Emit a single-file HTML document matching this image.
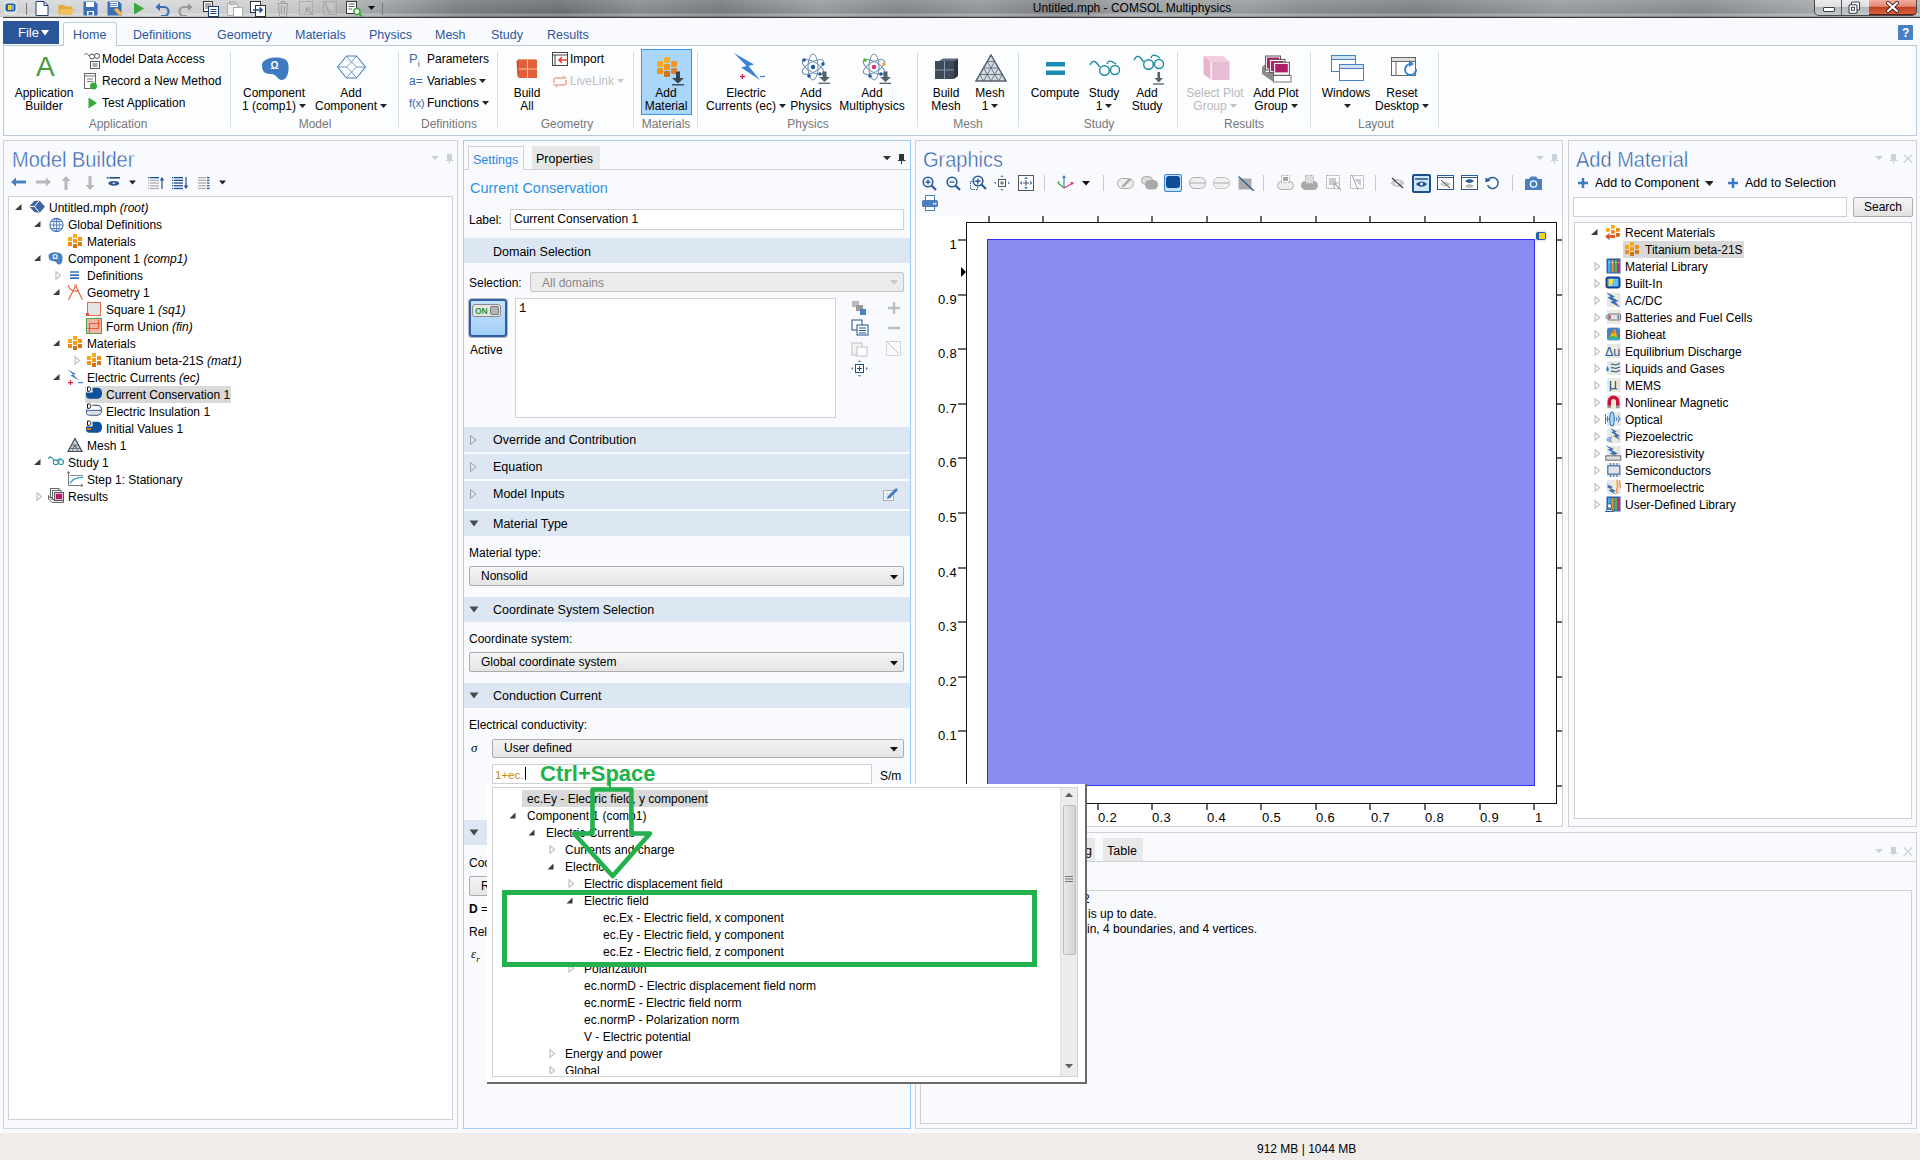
<!DOCTYPE html><html><head><meta charset="utf-8"><style>
*{margin:0;padding:0;box-sizing:border-box}
html,body{width:1928px;height:1168px;overflow:hidden;background:#fff}
body{font-family:"Liberation Sans",sans-serif;font-size:12px;color:#000;position:relative}
.t{position:absolute;white-space:nowrap;line-height:16px;height:16px}
.c{width:300px;text-align:center}
.i{font-style:italic}
</style></head><body><div style="position:absolute;left:0px;top:17px;width:1920px;height:1116px;background:#f9fafe"></div>
<div style="position:absolute;left:0px;top:0px;width:1920px;height:17px;background:linear-gradient(rgba(255,255,255,.10),rgba(0,0,0,.03) 75%,rgba(255,255,255,.30) 88%,rgba(0,0,0,.15)),linear-gradient(90deg,#d4d6d8 0px,#d8dadc 150px,#c8cacc 300px,#a0a3a5 385px,#7c7f82 460px,#6e7174 560px,#8a8d90 640px,#7a7d80 720px,#9a9da0 820px,#85888b 900px,#95989b 980px,#7e8184 1060px,#a3a6a8 1130px,#9a9d9f 1250px,#8c8f92 1300px,#7f8285 1420px,#9a9da0 1560px,#8a8d90 1700px,#a5a8aa 1810px,#b5b8ba 1920px)"></div>
<div style="position:absolute;left:0px;top:17px;width:1920px;height:1px;background:#3a3a3a"></div>
<div class="t c" style="left:982px;top:0px;font-size:12px">Untitled.mph - COMSOL Multiphysics</div>
<div style="position:absolute;left:3px;top:21px;width:56px;height:23px;background:#2b579a"></div>
<div class="t" style="left:18px;top:25px;color:#fff;font-size:13px">File</div>
<svg style="position:absolute;left:41px;top:30px;" width="8" height="6" viewBox="0 0 8 6"><path d="M0 0 H8 L4 5.5 Z" fill="#fff"/></svg>
<div style="position:absolute;left:63px;top:22px;width:54px;height:24px;background:#fcfdff;border:1px solid #b9cde5;border-bottom:none;border-radius:3px 3px 0 0"></div>
<div class="t" style="left:73px;top:27px;color:#2b579a;font-size:12.5px">Home</div>
<div class="t" style="left:133px;top:27px;color:#2b579a;font-size:12.5px">Definitions</div>
<div class="t" style="left:217px;top:27px;color:#2b579a;font-size:12.5px">Geometry</div>
<div class="t" style="left:295px;top:27px;color:#2b579a;font-size:12.5px">Materials</div>
<div class="t" style="left:369px;top:27px;color:#2b579a;font-size:12.5px">Physics</div>
<div class="t" style="left:435px;top:27px;color:#2b579a;font-size:12.5px">Mesh</div>
<div class="t" style="left:491px;top:27px;color:#2b579a;font-size:12.5px">Study</div>
<div class="t" style="left:547px;top:27px;color:#2b579a;font-size:12.5px">Results</div>
<div style="position:absolute;left:0px;top:17px;width:3px;height:119px;background:#fff"></div>
<div style="position:absolute;left:3px;top:45px;width:1914px;height:91px;background:#fcfdff;border:1px solid #b8c9dc"></div>
<div style="position:absolute;left:64px;top:45px;width:52px;height:1px;background:#fcfdff"></div>
<div style="position:absolute;left:230px;top:52px;width:1px;height:75px;background:#d5dde8"></div>
<div style="position:absolute;left:398px;top:52px;width:1px;height:75px;background:#d5dde8"></div>
<div style="position:absolute;left:497px;top:52px;width:1px;height:75px;background:#d5dde8"></div>
<div style="position:absolute;left:633px;top:52px;width:1px;height:75px;background:#d5dde8"></div>
<div style="position:absolute;left:697px;top:52px;width:1px;height:75px;background:#d5dde8"></div>
<div style="position:absolute;left:917px;top:52px;width:1px;height:75px;background:#d5dde8"></div>
<div style="position:absolute;left:1018px;top:52px;width:1px;height:75px;background:#d5dde8"></div>
<div style="position:absolute;left:1177px;top:52px;width:1px;height:75px;background:#d5dde8"></div>
<div style="position:absolute;left:1310px;top:52px;width:1px;height:75px;background:#d5dde8"></div>
<div style="position:absolute;left:1438px;top:52px;width:1px;height:75px;background:#d5dde8"></div>
<div class="t c" style="left:-32px;top:116px;color:#777">Application</div>
<div class="t c" style="left:165px;top:116px;color:#777">Model</div>
<div class="t c" style="left:299px;top:116px;color:#777">Definitions</div>
<div class="t c" style="left:417px;top:116px;color:#777">Geometry</div>
<div class="t c" style="left:516px;top:116px;color:#777">Materials</div>
<div class="t c" style="left:658px;top:116px;color:#777">Physics</div>
<div class="t c" style="left:818px;top:116px;color:#777">Mesh</div>
<div class="t c" style="left:949px;top:116px;color:#777">Study</div>
<div class="t c" style="left:1094px;top:116px;color:#777">Results</div>
<div class="t c" style="left:1226px;top:116px;color:#777">Layout</div>
<div style="position:absolute;left:1898px;top:25px;width:15px;height:15px;background:#4a7fc1;border-radius:1px"></div>
<div class="t" style="left:1902px;top:25px;color:#fff;font-weight:bold;font-size:12px">?</div>
<div style="position:absolute;left:3px;top:140px;width:455px;height:989px;background:#f9fafe;border:1px solid #d0d1d4"></div>
<div style="position:absolute;left:8px;top:196px;width:445px;height:924px;background:#fff;border:1px solid #d0d1d4"></div>
<div style="position:absolute;left:463px;top:140px;width:448px;height:989px;background:#f9fafe;border:1px solid #9fcdf3"></div>
<div style="position:absolute;left:915px;top:140px;width:648px;height:687px;background:#f9fafe;border:1px solid #d0d1d4"></div>
<div style="position:absolute;left:1568px;top:140px;width:349px;height:687px;background:#f9fafe;border:1px solid #d0d1d4"></div>
<div style="position:absolute;left:1574px;top:222px;width:338px;height:597px;background:#fff;border:1px solid #d0d1d4"></div>
<div style="position:absolute;left:915px;top:832px;width:1002px;height:297px;background:#f9fafe;border:1px solid #d0d1d4"></div>
<div style="position:absolute;left:0px;top:1133px;width:1920px;height:27px;background:#f0ecea"></div>
<div class="t" style="left:1257px;top:1141px;">912 MB | 1044 MB</div>
<div class="t" style="left:12px;top:152px;font-size:20px;color:#2a5aa6;line-height:24px;height:24px;top:147px;-webkit-text-stroke:0.45px #f9fafe;transform:scaleY(1.07);transform-origin:0 0">Model Builder</div>
<div class="t" style="left:923px;top:152px;font-size:20px;color:#2a5aa6;line-height:24px;height:24px;top:147px;-webkit-text-stroke:0.45px #f9fafe;transform:scaleY(1.07);transform-origin:0 0">Graphics</div>
<div class="t" style="left:1576px;top:152px;font-size:20px;color:#2a5aa6;line-height:24px;height:24px;top:147px;-webkit-text-stroke:0.45px #f9fafe;transform:scaleY(1.07);transform-origin:0 0">Add Material</div>
<div style="position:absolute;left:85px;top:386px;width:146px;height:17px;background:#d9d9d9"></div>
<svg style="position:absolute;left:15px;top:204px;" width="7" height="7" viewBox="0 0 7 7"><path d="M6.5 0 L6.5 6 L0 6 Z" fill="#3c3c3c"/></svg>
<div class="t" style="left:49px;top:200px;">Untitled.mph <i>(root)</i></div>
<svg style="position:absolute;left:34px;top:221px;" width="7" height="7" viewBox="0 0 7 7"><path d="M6.5 0 L6.5 6 L0 6 Z" fill="#3c3c3c"/></svg>
<div class="t" style="left:68px;top:217px;">Global Definitions</div>
<div class="t" style="left:87px;top:234px;">Materials</div>
<svg style="position:absolute;left:34px;top:255px;" width="7" height="7" viewBox="0 0 7 7"><path d="M6.5 0 L6.5 6 L0 6 Z" fill="#3c3c3c"/></svg>
<div class="t" style="left:68px;top:251px;">Component 1 <i>(comp1)</i></div>
<svg style="position:absolute;left:55px;top:271px;" width="7" height="9" viewBox="0 0 7 9"><path d="M1 0.8 L5.5 4.5 L1 8.2 Z" fill="none" stroke="#c4c4c4" stroke-width="1.3"/></svg>
<div class="t" style="left:87px;top:268px;">Definitions</div>
<svg style="position:absolute;left:53px;top:289px;" width="7" height="7" viewBox="0 0 7 7"><path d="M6.5 0 L6.5 6 L0 6 Z" fill="#3c3c3c"/></svg>
<div class="t" style="left:87px;top:285px;">Geometry 1</div>
<div class="t" style="left:106px;top:302px;">Square 1 <i>(sq1)</i></div>
<div class="t" style="left:106px;top:319px;">Form Union <i>(fin)</i></div>
<svg style="position:absolute;left:53px;top:340px;" width="7" height="7" viewBox="0 0 7 7"><path d="M6.5 0 L6.5 6 L0 6 Z" fill="#3c3c3c"/></svg>
<div class="t" style="left:87px;top:336px;">Materials</div>
<svg style="position:absolute;left:74px;top:356px;" width="7" height="9" viewBox="0 0 7 9"><path d="M1 0.8 L5.5 4.5 L1 8.2 Z" fill="none" stroke="#c4c4c4" stroke-width="1.3"/></svg>
<div class="t" style="left:106px;top:353px;">Titanium beta-21S <i>(mat1)</i></div>
<svg style="position:absolute;left:53px;top:374px;" width="7" height="7" viewBox="0 0 7 7"><path d="M6.5 0 L6.5 6 L0 6 Z" fill="#3c3c3c"/></svg>
<div class="t" style="left:87px;top:370px;">Electric Currents <i>(ec)</i></div>
<div class="t" style="left:106px;top:387px;">Current Conservation 1</div>
<div class="t" style="left:106px;top:404px;">Electric Insulation 1</div>
<div class="t" style="left:106px;top:421px;">Initial Values 1</div>
<div class="t" style="left:87px;top:438px;">Mesh 1</div>
<svg style="position:absolute;left:34px;top:459px;" width="7" height="7" viewBox="0 0 7 7"><path d="M6.5 0 L6.5 6 L0 6 Z" fill="#3c3c3c"/></svg>
<div class="t" style="left:68px;top:455px;">Study 1</div>
<div class="t" style="left:87px;top:472px;">Step 1: Stationary</div>
<svg style="position:absolute;left:36px;top:492px;" width="7" height="9" viewBox="0 0 7 9"><path d="M1 0.8 L5.5 4.5 L1 8.2 Z" fill="none" stroke="#c4c4c4" stroke-width="1.3"/></svg>
<div class="t" style="left:68px;top:489px;">Results</div>
<svg style="position:absolute;left:29px;top:199px;" width="16" height="16" viewBox="0 0 16 16"><path d="M0.3 7.5 L5.2 2 L10.5 1.5 L16 7.7 L10.5 14 L5.2 13 Z" fill="#3d65a0"/><path d="M1 7.5 H5.5 L10.5 1.2 M5.5 7.5 L10.5 13.8" fill="none" stroke="#fff" stroke-width="1"/></svg>
<svg style="position:absolute;left:48px;top:216px;" width="16" height="16" viewBox="0 0 16 16"><circle cx="8.5" cy="9" r="6.6" fill="#fff" stroke="#4a76b3" stroke-width="1.1"/><ellipse cx="8.5" cy="9" rx="2.8" ry="6.6" fill="none" stroke="#4a76b3" stroke-width=".9"/><path d="M2 9 H15 M3 5.5 H14 M3 12.5 H14 M8.5 2.5 V15.5" stroke="#4a76b3" stroke-width=".9"/></svg>
<svg style="position:absolute;left:67px;top:233px;" width="16" height="16" viewBox="0 0 16 16"><rect x="6" y="1" width="4" height="4" fill="#f8ab1c"/><rect x="6" y="6" width="4" height="4" fill="#f39a18"/><rect x="6" y="11" width="4" height="4" fill="#d27212"/><rect x="1" y="4" width="4" height="4" fill="#f8a81a"/><rect x="1" y="9" width="4" height="4" fill="#ef8c1a"/><rect x="11" y="4" width="4" height="4" fill="#f2941a"/><rect x="11" y="9" width="4" height="4" fill="#d87818"/></svg>
<svg style="position:absolute;left:48px;top:250px;" width="16" height="16" viewBox="0 0 16 16"><path d="M0.5 6 C0.5 1.5 12 1 14 5 C15.5 9 14 14 11.5 14.5 C9 15 8.5 11 5 11 C2 11 0.5 9 0.5 6 Z" fill="#4a80c0"/><text x="7" y="9" font-size="7" fill="#fff" text-anchor="middle" font-family="Liberation Sans" font-weight="bold">&#937;</text></svg>
<svg style="position:absolute;left:67px;top:267px;" width="16" height="16" viewBox="0 0 16 16"><path d="M3 5 H12 M3 8.1 H12 M3 11.2 H12" stroke="#3a70b8" stroke-width="1.7"/></svg>
<svg style="position:absolute;left:67px;top:284px;" width="16" height="16" viewBox="0 0 16 16"><circle cx="8.6" cy="1.6" r="1" fill="none" stroke="#e0603a" stroke-width=".9"/><path d="M8.3 2.5 L1.5 15.8 M8.9 2.5 L15.5 15.8 M1.5 1 C2 6.5 8 8.5 11.5 6" fill="none" stroke="#e0603a" stroke-width="1.1"/></svg>
<svg style="position:absolute;left:86px;top:301px;" width="16" height="16" viewBox="0 0 16 16"><rect x="1.5" y="1.5" width="13" height="13" fill="#e4e4e4" stroke="#e06a4a"/><rect x="0" y="12" width="3" height="3" fill="#d9543a"/></svg>
<svg style="position:absolute;left:86px;top:318px;" width="16" height="16" viewBox="0 0 16 16"><rect x="0.5" y="0.5" width="15" height="15" fill="#f2b4a4" stroke="#4aa64a"/><path d="M3.5 5.5 H12.5 V10.5 H3.5 Z M12.5 1.5 V5.5 H14.5 M3.5 10.5 V14.5 M1.5 10.5 H3.5" fill="none" stroke="#e0603a" stroke-width="1.2"/></svg>
<svg style="position:absolute;left:67px;top:335px;" width="16" height="16" viewBox="0 0 16 16"><rect x="6" y="1" width="4" height="4" fill="#f8ab1c"/><rect x="6" y="6" width="4" height="4" fill="#f39a18"/><rect x="6" y="11" width="4" height="4" fill="#d27212"/><rect x="1" y="4" width="4" height="4" fill="#f8a81a"/><rect x="1" y="9" width="4" height="4" fill="#ef8c1a"/><rect x="11" y="4" width="4" height="4" fill="#f2941a"/><rect x="11" y="9" width="4" height="4" fill="#d87818"/></svg>
<svg style="position:absolute;left:86px;top:352px;" width="16" height="16" viewBox="0 0 16 16"><rect x="6" y="1" width="4" height="4" fill="#f8ab1c"/><rect x="6" y="6" width="4" height="4" fill="#f39a18"/><rect x="6" y="11" width="4" height="4" fill="#d27212"/><rect x="1" y="4" width="4" height="4" fill="#f8a81a"/><rect x="1" y="9" width="4" height="4" fill="#ef8c1a"/><rect x="11" y="4" width="4" height="4" fill="#f2941a"/><rect x="11" y="9" width="4" height="4" fill="#d87818"/></svg>
<svg style="position:absolute;left:67px;top:369px;" width="16" height="16" viewBox="0 0 16 16"><path d="M0.5 0.5 L9 5 L6.5 5.8 L12 11.5 L3.5 6.5 L6 5.5 Z" fill="#3d7dd0"/><path d="M1 13.6 H6 M3.5 11.1 V16" stroke="#d8204a" stroke-width="1.2"/><path d="M11 13.6 H16" stroke="#3d7dd0" stroke-width="1.2"/></svg>
<svg style="position:absolute;left:86px;top:386px;" width="16" height="16" viewBox="0 0 16 16"><path d="M0 4.5 C0 2.5 1 1.8 3 1.8 H11 C14.5 1.8 16 4 16 7.3 C16 10.5 14.5 12.8 11 12.8 H3.5 C1 12.8 0 11.5 0 9 Z" fill="#0f529a"/><rect x="0" y="0" width="6.5" height="6.5" fill="#fff"/><path d="M1.5 1 H3.3 C5.3 1 5.3 5.3 3.3 5.3 H1.5 Z" fill="none" stroke="#111" stroke-width="1"/></svg>
<svg style="position:absolute;left:86px;top:403px;" width="16" height="16" viewBox="0 0 16 16"><path d="M0.5 5 C0.5 3 1.5 2.3 3 2.3 H11 C14 2.3 15.5 4 15.5 7.5 C15.5 10.5 14 12.3 11 12.3 H3.5 C1.5 12.3 0.5 11 0.5 9 Z" fill="#dde1e6" stroke="#3a5a8a" stroke-width="1"/><path d="M0.5 2.3 H11 C14 2.3 15.5 4 15.5 7.3 H0.5 Z" fill="#fff" stroke="#3a5a8a" stroke-width="1"/><rect x="0" y="0" width="6.5" height="6.5" fill="#fff"/><path d="M1.5 1 H3.3 C5.3 1 5.3 5.3 3.3 5.3 H1.5 Z" fill="none" stroke="#111" stroke-width="1"/></svg>
<svg style="position:absolute;left:86px;top:420px;" width="16" height="16" viewBox="0 0 16 16"><path d="M0 4.5 C0 2.5 1 1.8 3 1.8 H11 C14.5 1.8 16 4 16 7.3 C16 10.5 14.5 12.8 11 12.8 H3.5 C1 12.8 0 11.5 0 9 Z" fill="#0f529a"/><rect x="0" y="0" width="6.5" height="6.5" fill="#fff"/><path d="M1.5 1 H3.3 C5.3 1 5.3 5.3 3.3 5.3 H1.5 Z" fill="none" stroke="#111" stroke-width="1"/><path d="M0.5 8 H5.5 C5.5 11 0.5 11 0.5 8 Z" fill="#e8780e"/></svg>
<svg style="position:absolute;left:67px;top:437px;" width="16" height="16" viewBox="0 0 16 16"><path d="M8 1.5 L15 14.5 H1 Z" fill="#c9d0d8" stroke="#3e4a5a" stroke-width="1.2"/><path d="M4.5 8 H11.5 M3 11.5 H13 M6 11.5 L8 8 L10 11.5 M5 14.5 L8 8 L11 14.5" stroke="#3e4a5a" stroke-width=".6" fill="none"/></svg>
<svg style="position:absolute;left:48px;top:454px;" width="16" height="16" viewBox="0 0 16 16"><path d="M0.5 5 C2 1.5 4 2.5 5.8 6.5" fill="none" stroke="#1f8fa0" stroke-width="1.1"/><circle cx="7.8" cy="8.3" r="2.4" fill="none" stroke="#1f8fa0" stroke-width="1.1"/><circle cx="13" cy="8" r="2.5" fill="none" stroke="#1f8fa0" stroke-width="1.1"/><path d="M10 6.5 C10.5 3.5 12 4 13.5 5.5" fill="none" stroke="#1f8fa0" stroke-width="1"/></svg>
<svg style="position:absolute;left:67px;top:471px;" width="16" height="16" viewBox="0 0 16 16"><path d="M1.5 1 V14.5 H15.5" fill="none" stroke="#777" stroke-width="1"/><path d="M0 2.5 L1.5 0.5 L3 2.5 M14 13 L16 14.5 L14 16" fill="none" stroke="#777" stroke-width="1"/><path d="M3 4.5 H16" stroke="#888" stroke-width="1"/><path d="M3 12.5 C5 8 9 6.3 16 6.3" fill="none" stroke="#1a8fc0" stroke-width="1.3"/></svg>
<svg style="position:absolute;left:48px;top:488px;" width="16" height="16" viewBox="0 0 16 16"><path d="M0.5 7.5 V11 L4 14.5 H15.5 V11.5 H4 L0.5 8 Z" fill="#eee" stroke="#666"/><rect x="2.5" y="0.5" width="8.5" height="9" fill="#fff" stroke="#666"/><rect x="4.5" y="2.5" width="8.5" height="9" fill="#fff" stroke="#666"/><rect x="6.5" y="4.5" width="9" height="8" fill="#fff" stroke="#555"/><rect x="7.5" y="5.5" width="7" height="6" fill="#b01e6a" stroke="#f0c8dc" stroke-width=".8"/></svg>
<svg style="position:absolute;left:10px;top:176px;" width="18" height="12" viewBox="0 0 18 12"><path d="M1 6 L6 1.5 V4.5 H16 V7.5 H6 V10.5 Z" fill="#4a80c0"/></svg>
<svg style="position:absolute;left:34px;top:176px;" width="18" height="12" viewBox="0 0 18 12"><path d="M17 6 L12 1.5 V4.5 H2 V7.5 H12 V10.5 Z" fill="#b8b8b8"/></svg>
<svg style="position:absolute;left:60px;top:175px;" width="12" height="16" viewBox="0 0 12 16"><path d="M6 1 L10.5 6 H7.5 V15 H4.5 V6 H1.5 Z" fill="#b8b8b8"/></svg>
<svg style="position:absolute;left:84px;top:175px;" width="12" height="16" viewBox="0 0 12 16"><path d="M6 15 L10.5 10 H7.5 V1 H4.5 V10 H1.5 Z" fill="#b8b8b8"/></svg>
<svg style="position:absolute;left:106px;top:176px;" width="16" height="12" viewBox="0 0 16 12"><rect x="1" y="1" width="1.6" height="1.6" fill="#1d4f8f"/><rect x="3.5" y="1" width="10.5" height="1.6" fill="#1d4f8f"/><ellipse cx="7.8" cy="7.3" rx="5.3" ry="2.4" fill="#2a5a98"/><ellipse cx="7.8" cy="7.3" rx="1.3" ry=".8" fill="#fff"/></svg>
<svg style="position:absolute;left:129px;top:180px;" width="8" height="5" viewBox="0 0 8 5"><path d="M0 0.5 H7 L3.5 4.5 Z" fill="#222"/></svg>
<svg style="position:absolute;left:148px;top:176px;" width="17" height="14" viewBox="0 0 17 14"><rect x="0" y="1" width="1.3" height="1.3" fill="#1d4f8f"/><rect x="2" y="1" width="9" height="1.3" fill="#1d4f8f"/><rect x="0" y="3.7" width="1.3" height="1.3" fill="#b0b0b0"/><rect x="2" y="3.7" width="9" height="1.3" fill="#b0b0b0"/><rect x="0" y="6.4" width="1.3" height="1.3" fill="#b0b0b0"/><rect x="2" y="6.4" width="9" height="1.3" fill="#b0b0b0"/><rect x="0" y="9.1" width="1.3" height="1.3" fill="#b0b0b0"/><rect x="2" y="9.1" width="9" height="1.3" fill="#b0b0b0"/><rect x="0" y="11.8" width="1.3" height="1.3" fill="#b0b0b0"/><rect x="2" y="11.8" width="9" height="1.3" fill="#b0b0b0"/><path d="M14 13 V2.5" stroke="#1d4f8f" stroke-width="1.2"/><path d="M11.8 4.5 L14 1 L16.2 4.5 Z" fill="#1d4f8f"/></svg>
<svg style="position:absolute;left:172px;top:176px;" width="17" height="14" viewBox="0 0 17 14"><rect x="0" y="1" width="1.3" height="1.3" fill="#1d4f8f"/><rect x="2" y="1" width="9" height="1.3" fill="#1d4f8f"/><rect x="0" y="3.7" width="1.3" height="1.3" fill="#1d4f8f"/><rect x="2" y="3.7" width="9" height="1.3" fill="#1d4f8f"/><rect x="0" y="6.4" width="1.3" height="1.3" fill="#1d4f8f"/><rect x="2" y="6.4" width="9" height="1.3" fill="#1d4f8f"/><rect x="0" y="9.1" width="1.3" height="1.3" fill="#1d4f8f"/><rect x="2" y="9.1" width="9" height="1.3" fill="#1d4f8f"/><rect x="0" y="11.8" width="1.3" height="1.3" fill="#1d4f8f"/><rect x="2" y="11.8" width="9" height="1.3" fill="#1d4f8f"/><path d="M14 1 V11.5" stroke="#1d4f8f" stroke-width="1.2"/><path d="M11.8 9.5 L14 13 L16.2 9.5 Z" fill="#1d4f8f"/></svg>
<svg style="position:absolute;left:198px;top:176px;" width="12" height="14" viewBox="0 0 12 14"><rect x="0" y="1" width="8" height="1.3" fill="#b0b0b0"/><rect x="9" y="1" width="2.5" height="1.3" fill="#1d4f8f"/><rect x="0" y="3.7" width="8" height="1.3" fill="#b0b0b0"/><rect x="9" y="3.7" width="2.5" height="1.3" fill="#1d4f8f"/><rect x="0" y="6.4" width="8" height="1.3" fill="#b0b0b0"/><rect x="9" y="6.4" width="2.5" height="1.3" fill="#1d4f8f"/><rect x="0" y="9.1" width="8" height="1.3" fill="#b0b0b0"/><rect x="9" y="9.1" width="2.5" height="1.3" fill="#1d4f8f"/><rect x="0" y="11.8" width="8" height="1.3" fill="#b0b0b0"/><rect x="9" y="11.8" width="2.5" height="1.3" fill="#1d4f8f"/></svg>
<svg style="position:absolute;left:219px;top:180px;" width="8" height="5" viewBox="0 0 8 5"><path d="M0 0.5 H7 L3.5 4.5 Z" fill="#222"/></svg>
<svg style="position:absolute;left:431px;top:156px;" width="8" height="5" viewBox="0 0 8 5"><path d="M0 0 H8 L4 4.2 Z" fill="#c9d1dc"/></svg>
<svg style="position:absolute;left:446px;top:154px;" width="8" height="11" viewBox="0 0 8 11"><path d="M1 0 H6 V6 H7.5 V7 H4 V10 H3 V7 H-0.5 V6 H1 Z" fill="#c9d1dc"/></svg>
<svg style="position:absolute;left:1536px;top:156px;" width="8" height="5" viewBox="0 0 8 5"><path d="M0 0 H8 L4 4.2 Z" fill="#c9d1dc"/></svg>
<svg style="position:absolute;left:1551px;top:154px;" width="8" height="11" viewBox="0 0 8 11"><path d="M1 0 H6 V6 H7.5 V7 H4 V10 H3 V7 H-0.5 V6 H1 Z" fill="#c9d1dc"/></svg>
<svg style="position:absolute;left:1875px;top:156px;" width="8" height="5" viewBox="0 0 8 5"><path d="M0 0 H8 L4 4.2 Z" fill="#c9d1dc"/></svg>
<svg style="position:absolute;left:1890px;top:154px;" width="8" height="11" viewBox="0 0 8 11"><path d="M1 0 H6 V6 H7.5 V7 H4 V10 H3 V7 H-0.5 V6 H1 Z" fill="#c9d1dc"/></svg>
<svg style="position:absolute;left:1903px;top:154px;" width="10" height="9" viewBox="0 0 10 9"><path d="M0.8 0.5 L9.2 8.5 M9.2 0.5 L0.8 8.5" stroke="#c9d1dc" stroke-width="1.3"/></svg>
<svg style="position:absolute;left:1875px;top:849px;" width="8" height="5" viewBox="0 0 8 5"><path d="M0 0 H8 L4 4.2 Z" fill="#c9d1dc"/></svg>
<svg style="position:absolute;left:1890px;top:847px;" width="8" height="11" viewBox="0 0 8 11"><path d="M1 0 H6 V6 H7.5 V7 H4 V10 H3 V7 H-0.5 V6 H1 Z" fill="#c9d1dc"/></svg>
<svg style="position:absolute;left:1903px;top:847px;" width="10" height="9" viewBox="0 0 10 9"><path d="M0.8 0.5 L9.2 8.5 M9.2 0.5 L0.8 8.5" stroke="#c9d1dc" stroke-width="1.3"/></svg>
<div style="position:absolute;left:464px;top:169px;width:446px;height:1px;background:#d0d1d4"></div>
<div style="position:absolute;left:468px;top:146px;width:56px;height:24px;background:#f9fafe;border:1px solid #d0d1d4;border-bottom:none"></div>
<div class="t" style="left:473px;top:152px;color:#1e87e5;font-size:12.5px">Settings</div>
<div style="position:absolute;left:532px;top:146px;width:68px;height:23px;background:#e6e6e6"></div>
<div class="t" style="left:536px;top:151px;font-size:12.5px">Properties</div>
<svg style="position:absolute;left:883px;top:156px;" width="8" height="5" viewBox="0 0 8 5"><path d="M0 0 H8 L4 4.2 Z" fill="#333"/></svg>
<svg style="position:absolute;left:898px;top:154px;" width="8" height="11" viewBox="0 0 8 11"><path d="M1 0 H6 V6 H7.5 V7 H4 V10 H3 V7 H-0.5 V6 H1 Z" fill="#333"/></svg>
<div class="t" style="left:470px;top:181px;color:#2e93e3;font-size:14.5px;line-height:18px;height:18px;top:179px">Current Conservation</div>
<div class="t" style="left:469px;top:212px;">Label:</div>
<div style="position:absolute;left:510px;top:209px;width:394px;height:21px;background:#fff;border:1px solid #d0d0d0"></div>
<div class="t" style="left:514px;top:211px;">Current Conservation 1</div>
<div style="position:absolute;left:464px;top:238px;width:446px;height:25px;background:#dde7f3"></div>
<div class="t" style="left:493px;top:244px;font-size:12.5px">Domain Selection</div>
<div class="t" style="left:469px;top:275px;">Selection:</div>
<div style="position:absolute;left:530px;top:272px;width:374px;height:20px;background:#ececec;border:1px solid #c4c4c4;border-radius:2px"></div>
<div class="t" style="left:542px;top:275px;color:#888">All domains</div>
<svg style="position:absolute;left:890px;top:280px;" width="8" height="5" viewBox="0 0 8 5"><path d="M0 0 H8 L4 4.5 Z" fill="#c8c8c8"/></svg>
<div style="position:absolute;left:469px;top:299px;width:38px;height:38px;background:linear-gradient(#c4e2fc,#a4d0f6);border:2px solid #2f5ea8;border-radius:3px;box-shadow:0 0 0 1px #b8b8b8"></div>
<div style="position:absolute;left:472px;top:304px;width:29px;height:13px;background:#e6e6e6;border:1.5px solid #8a8a8a;border-radius:3px"></div>
<div class="t" style="left:475px;top:303px;color:#1a9a3a;font-size:8.5px;font-weight:bold;line-height:10px;height:10px;top:306px">ON</div>
<div style="position:absolute;left:490px;top:306px;width:9px;height:9px;background:#b4b4b4;border:1.5px solid #7a7a7a;border-radius:2px"></div>
<div class="t" style="left:470px;top:342px;">Active</div>
<div style="position:absolute;left:515px;top:298px;width:321px;height:120px;background:#fff;border:1px solid #cfd2d6"></div>
<div class="t" style="left:519px;top:301px;font-family:'Liberation Mono';font-size:12px">1</div>
<svg style="position:absolute;left:851px;top:300px;" width="16" height="16" viewBox="0 0 16 16"><rect x="1" y="1" width="7" height="6" fill="#bbb"/><rect x="5" y="5" width="7" height="6" fill="#999"/><rect x="9" y="9" width="6" height="6" fill="#4a80c0"/></svg>
<svg style="position:absolute;left:886px;top:300px;" width="16" height="16" viewBox="0 0 16 16"><path d="M8 2 V14 M2 8 H14" stroke="#b8bec6" stroke-width="2.5"/></svg>
<svg style="position:absolute;left:851px;top:319px;" width="18" height="17" viewBox="0 0 18 17"><rect x="1" y="1" width="10" height="10" fill="#fff" stroke="#1d4f8f"/><rect x="6" y="6" width="11" height="10" fill="#fff" stroke="#1d4f8f"/><path d="M8 9 H15 M8 11.5 H15 M8 14 H15" stroke="#1d4f8f"/></svg>
<svg style="position:absolute;left:886px;top:320px;" width="16" height="16" viewBox="0 0 16 16"><path d="M2 8 H14" stroke="#b8bec6" stroke-width="2.5"/></svg>
<svg style="position:absolute;left:851px;top:340px;" width="17" height="17" viewBox="0 0 17 17"><rect x="1" y="3" width="10" height="12" fill="#f2f2f2" stroke="#c0c0c0"/><rect x="6" y="7" width="10" height="9" fill="#fff" stroke="#c0c0c0"/></svg>
<svg style="position:absolute;left:885px;top:340px;" width="17" height="17" viewBox="0 0 17 17"><rect x="1.5" y="1.5" width="14" height="14" fill="none" stroke="#c0c0c0" stroke-dasharray="2 1"/><path d="M3 3 L14 14" stroke="#c0c0c0"/></svg>
<svg style="position:absolute;left:851px;top:360px;" width="17" height="17" viewBox="0 0 17 17"><rect x="4.5" y="4.5" width="8" height="8" fill="#fff" stroke="#1d4f8f"/><path d="M8.5 6 V11 M6 8.5 H11" stroke="#1d4f8f"/><path d="M8.5 0 L10 2 H7 Z M8.5 17 L10 15 H7 Z M0 8.5 L2 7 V10 Z M17 8.5 L15 7 V10 Z" fill="#4a80c0"/></svg>
<div style="position:absolute;left:464px;top:427px;width:446px;height:25px;background:#dde7f3"></div>
<svg style="position:absolute;left:470px;top:435px;" width="7" height="10" viewBox="0 0 7 10"><path d="M0.5 0.5 L6 5 L0.5 9.5 Z" fill="none" stroke="#9aa0a8"/></svg>
<div class="t" style="left:493px;top:432px;font-size:12.5px">Override and Contribution</div>
<div style="position:absolute;left:464px;top:454px;width:446px;height:25px;background:#dde7f3"></div>
<svg style="position:absolute;left:470px;top:462px;" width="7" height="10" viewBox="0 0 7 10"><path d="M0.5 0.5 L6 5 L0.5 9.5 Z" fill="none" stroke="#9aa0a8"/></svg>
<div class="t" style="left:493px;top:459px;font-size:12.5px">Equation</div>
<div style="position:absolute;left:464px;top:481px;width:446px;height:25px;background:#dde7f3"></div>
<svg style="position:absolute;left:470px;top:489px;" width="7" height="10" viewBox="0 0 7 10"><path d="M0.5 0.5 L6 5 L0.5 9.5 Z" fill="none" stroke="#9aa0a8"/></svg>
<div class="t" style="left:493px;top:486px;font-size:12.5px">Model Inputs</div>
<div style="position:absolute;left:464px;top:506px;width:446px;height:3px;background:#dde7f3"></div>
<svg style="position:absolute;left:882px;top:485px;" width="17" height="17" viewBox="0 0 17 17"><rect x="1.5" y="5.5" width="10" height="10" fill="#fff" stroke="#aab"/><path d="M1.5 9 H11.5 M1.5 12 H11.5 M5 5.5 V15.5 M8 5.5 V15.5" stroke="#ccd" stroke-width=".8"/><path d="M6 11 L14 3 L16 5 L8 13 L5 14 Z" fill="#3f7bc0"/></svg>
<div style="position:absolute;left:464px;top:511px;width:446px;height:25px;background:#dde7f3"></div>
<svg style="position:absolute;left:469px;top:520px;" width="10" height="7" viewBox="0 0 10 7"><path d="M0.5 0.5 H9.5 L5 6.5 Z" fill="#4a4a4a"/></svg>
<div class="t" style="left:493px;top:516px;font-size:12.5px">Material Type</div>
<div class="t" style="left:469px;top:545px;">Material type:</div>
<div style="position:absolute;left:469px;top:566px;width:435px;height:20px;background:linear-gradient(#f4f4f4,#e4e4e4);border:1px solid #acacac;border-radius:2px"></div>
<div class="t" style="left:481px;top:568px;">Nonsolid</div>
<svg style="position:absolute;left:890px;top:575px;" width="8" height="5" viewBox="0 0 8 5"><path d="M0 0 H8 L4 4.5 Z" fill="#111"/></svg>
<div style="position:absolute;left:464px;top:597px;width:446px;height:25px;background:#dde7f3"></div>
<svg style="position:absolute;left:469px;top:606px;" width="10" height="7" viewBox="0 0 10 7"><path d="M0.5 0.5 H9.5 L5 6.5 Z" fill="#4a4a4a"/></svg>
<div class="t" style="left:493px;top:602px;font-size:12.5px">Coordinate System Selection</div>
<div class="t" style="left:469px;top:631px;">Coordinate system:</div>
<div style="position:absolute;left:469px;top:652px;width:435px;height:20px;background:linear-gradient(#f4f4f4,#e4e4e4);border:1px solid #acacac;border-radius:2px"></div>
<div class="t" style="left:481px;top:654px;">Global coordinate system</div>
<svg style="position:absolute;left:890px;top:661px;" width="8" height="5" viewBox="0 0 8 5"><path d="M0 0 H8 L4 4.5 Z" fill="#111"/></svg>
<div style="position:absolute;left:464px;top:683px;width:446px;height:25px;background:#dde7f3"></div>
<svg style="position:absolute;left:469px;top:692px;" width="10" height="7" viewBox="0 0 10 7"><path d="M0.5 0.5 H9.5 L5 6.5 Z" fill="#4a4a4a"/></svg>
<div class="t" style="left:493px;top:688px;font-size:12.5px">Conduction Current</div>
<div class="t" style="left:469px;top:717px;">Electrical conductivity:</div>
<div class="t" style="left:471px;top:740px;font-family:'Liberation Serif';font-style:italic;font-size:13px">&#963;</div>
<div style="position:absolute;left:492px;top:739px;width:412px;height:19px;background:linear-gradient(#f4f4f4,#e4e4e4);border:1px solid #acacac;border-radius:2px"></div>
<div class="t" style="left:504px;top:740px;">User defined</div>
<svg style="position:absolute;left:890px;top:747px;" width="8" height="5" viewBox="0 0 8 5"><path d="M0 0 H8 L4 4.5 Z" fill="#111"/></svg>
<div style="position:absolute;left:492px;top:764px;width:380px;height:20px;background:#fff;border:1px solid #d0d0d0"></div>
<div class="t" style="left:495px;top:767px;color:#c08a1a;font-size:11.5px">1+ec.</div>
<div style="position:absolute;left:525px;top:767px;width:1px;height:13px;background:#000"></div>
<div class="t" style="left:880px;top:768px;">S/m</div>
<div style="position:absolute;left:464px;top:820px;width:446px;height:25px;background:#dde7f3"></div>
<svg style="position:absolute;left:469px;top:829px;" width="10" height="7" viewBox="0 0 10 7"><path d="M0.5 0.5 H9.5 L5 6.5 Z" fill="#4a4a4a"/></svg>
<div class="t" style="left:493px;top:825px;font-size:12.5px"></div>
<div class="t" style="left:469px;top:855px;">Coordinate system:</div>
<div style="position:absolute;left:469px;top:876px;width:435px;height:20px;background:linear-gradient(#f4f4f4,#e4e4e4);border:1px solid #acacac;border-radius:2px"></div>
<div class="t" style="left:481px;top:878px;">Reference</div>
<svg style="position:absolute;left:890px;top:885px;" width="8" height="5" viewBox="0 0 8 5"><path d="M0 0 H8 L4 4.5 Z" fill="#111"/></svg>
<div class="t" style="left:469px;top:901px;"><b>D</b> = &#949;<sub>0</sub>&#949;<sub>r</sub><b>E</b></div>
<div class="t" style="left:469px;top:924px;">Relative permittivity:</div>
<div class="t" style="left:471px;top:946px;font-family:'Liberation Serif';font-style:italic;font-size:13px">&#949;<sub style='font-size:9px'>r</sub></div>
<div style="position:absolute;left:492px;top:944px;width:412px;height:19px;background:linear-gradient(#f4f4f4,#e4e4e4);border:1px solid #acacac;border-radius:2px"></div>
<div class="t" style="left:504px;top:945px;">User defined</div>
<svg style="position:absolute;left:890px;top:952px;" width="8" height="5" viewBox="0 0 8 5"><path d="M0 0 H8 L4 4.5 Z" fill="#111"/></svg>
<div style="position:absolute;left:916px;top:216px;width:646px;height:610px;background:#fff"></div>
<div style="position:absolute;left:966px;top:222px;width:591px;height:582px;background:#fff;border:1px solid #111"></div>
<div style="position:absolute;left:987px;top:239px;width:548px;height:547px;background:#8b8cf0;border:1px solid #3030f8"></div>
<div style="position:absolute;left:988px;top:216px;width:2px;height:6px;background:#6a6a6a"></div>
<div style="position:absolute;left:988px;top:804px;width:2px;height:6px;background:#6a6a6a"></div>
<div style="position:absolute;left:958px;top:785px;width:8px;height:2px;background:#6a6a6a"></div>
<div style="position:absolute;left:1557px;top:785px;width:5px;height:2px;background:#6a6a6a"></div>
<div style="position:absolute;left:1042px;top:216px;width:2px;height:6px;background:#6a6a6a"></div>
<div style="position:absolute;left:1042px;top:804px;width:2px;height:6px;background:#6a6a6a"></div>
<div style="position:absolute;left:958px;top:730px;width:8px;height:2px;background:#6a6a6a"></div>
<div style="position:absolute;left:1557px;top:730px;width:5px;height:2px;background:#6a6a6a"></div>
<div style="position:absolute;left:1097px;top:216px;width:2px;height:6px;background:#6a6a6a"></div>
<div style="position:absolute;left:1097px;top:804px;width:2px;height:6px;background:#6a6a6a"></div>
<div style="position:absolute;left:958px;top:676px;width:8px;height:2px;background:#6a6a6a"></div>
<div style="position:absolute;left:1557px;top:676px;width:5px;height:2px;background:#6a6a6a"></div>
<div style="position:absolute;left:1151px;top:216px;width:2px;height:6px;background:#6a6a6a"></div>
<div style="position:absolute;left:1151px;top:804px;width:2px;height:6px;background:#6a6a6a"></div>
<div style="position:absolute;left:958px;top:621px;width:8px;height:2px;background:#6a6a6a"></div>
<div style="position:absolute;left:1557px;top:621px;width:5px;height:2px;background:#6a6a6a"></div>
<div style="position:absolute;left:1206px;top:216px;width:2px;height:6px;background:#6a6a6a"></div>
<div style="position:absolute;left:1206px;top:804px;width:2px;height:6px;background:#6a6a6a"></div>
<div style="position:absolute;left:958px;top:567px;width:8px;height:2px;background:#6a6a6a"></div>
<div style="position:absolute;left:1557px;top:567px;width:5px;height:2px;background:#6a6a6a"></div>
<div style="position:absolute;left:1260px;top:216px;width:2px;height:6px;background:#6a6a6a"></div>
<div style="position:absolute;left:1260px;top:804px;width:2px;height:6px;background:#6a6a6a"></div>
<div style="position:absolute;left:958px;top:512px;width:8px;height:2px;background:#6a6a6a"></div>
<div style="position:absolute;left:1557px;top:512px;width:5px;height:2px;background:#6a6a6a"></div>
<div style="position:absolute;left:1315px;top:216px;width:2px;height:6px;background:#6a6a6a"></div>
<div style="position:absolute;left:1315px;top:804px;width:2px;height:6px;background:#6a6a6a"></div>
<div style="position:absolute;left:958px;top:457px;width:8px;height:2px;background:#6a6a6a"></div>
<div style="position:absolute;left:1557px;top:457px;width:5px;height:2px;background:#6a6a6a"></div>
<div style="position:absolute;left:1369px;top:216px;width:2px;height:6px;background:#6a6a6a"></div>
<div style="position:absolute;left:1369px;top:804px;width:2px;height:6px;background:#6a6a6a"></div>
<div style="position:absolute;left:958px;top:403px;width:8px;height:2px;background:#6a6a6a"></div>
<div style="position:absolute;left:1557px;top:403px;width:5px;height:2px;background:#6a6a6a"></div>
<div style="position:absolute;left:1424px;top:216px;width:2px;height:6px;background:#6a6a6a"></div>
<div style="position:absolute;left:1424px;top:804px;width:2px;height:6px;background:#6a6a6a"></div>
<div style="position:absolute;left:958px;top:348px;width:8px;height:2px;background:#6a6a6a"></div>
<div style="position:absolute;left:1557px;top:348px;width:5px;height:2px;background:#6a6a6a"></div>
<div style="position:absolute;left:1479px;top:216px;width:2px;height:6px;background:#6a6a6a"></div>
<div style="position:absolute;left:1479px;top:804px;width:2px;height:6px;background:#6a6a6a"></div>
<div style="position:absolute;left:958px;top:294px;width:8px;height:2px;background:#6a6a6a"></div>
<div style="position:absolute;left:1557px;top:294px;width:5px;height:2px;background:#6a6a6a"></div>
<div style="position:absolute;left:1533px;top:216px;width:2px;height:6px;background:#6a6a6a"></div>
<div style="position:absolute;left:1533px;top:804px;width:2px;height:6px;background:#6a6a6a"></div>
<div style="position:absolute;left:958px;top:239px;width:8px;height:2px;background:#6a6a6a"></div>
<div style="position:absolute;left:1557px;top:239px;width:5px;height:2px;background:#6a6a6a"></div>
<div class="t" style="left:1098px;top:810px;font-size:13px;letter-spacing:.3px">0.2</div>
<div class="t" style="left:1152px;top:810px;font-size:13px;letter-spacing:.3px">0.3</div>
<div class="t" style="left:1207px;top:810px;font-size:13px;letter-spacing:.3px">0.4</div>
<div class="t" style="left:1262px;top:810px;font-size:13px;letter-spacing:.3px">0.5</div>
<div class="t" style="left:1316px;top:810px;font-size:13px;letter-spacing:.3px">0.6</div>
<div class="t" style="left:1371px;top:810px;font-size:13px;letter-spacing:.3px">0.7</div>
<div class="t" style="left:1425px;top:810px;font-size:13px;letter-spacing:.3px">0.8</div>
<div class="t" style="left:1480px;top:810px;font-size:13px;letter-spacing:.3px">0.9</div>
<div class="t" style="left:1535px;top:810px;font-size:13px;letter-spacing:.3px">1</div>
<div class="t" style="left:860px;top:728px;width:97px;text-align:right;font-size:13px;letter-spacing:.3px">0.1</div>
<div class="t" style="left:860px;top:674px;width:97px;text-align:right;font-size:13px;letter-spacing:.3px">0.2</div>
<div class="t" style="left:860px;top:619px;width:97px;text-align:right;font-size:13px;letter-spacing:.3px">0.3</div>
<div class="t" style="left:860px;top:565px;width:97px;text-align:right;font-size:13px;letter-spacing:.3px">0.4</div>
<div class="t" style="left:860px;top:510px;width:97px;text-align:right;font-size:13px;letter-spacing:.3px">0.5</div>
<div class="t" style="left:860px;top:455px;width:97px;text-align:right;font-size:13px;letter-spacing:.3px">0.6</div>
<div class="t" style="left:860px;top:401px;width:97px;text-align:right;font-size:13px;letter-spacing:.3px">0.7</div>
<div class="t" style="left:860px;top:346px;width:97px;text-align:right;font-size:13px;letter-spacing:.3px">0.8</div>
<div class="t" style="left:860px;top:292px;width:97px;text-align:right;font-size:13px;letter-spacing:.3px">0.9</div>
<div class="t" style="left:860px;top:237px;width:97px;text-align:right;font-size:13px;letter-spacing:.3px">1</div>
<svg style="position:absolute;left:961px;top:267px;" width="5" height="10" viewBox="0 0 5 10"><path d="M0 0 L5 5 L0 10 Z" fill="#000"/></svg>
<svg style="position:absolute;left:1534px;top:229px;" width="15" height="14" viewBox="0 0 15 14"><path d="M1 2 L11 1 L14 7 L11 13 L1 12 Z" fill="#e8e8ee" opacity=".8"/><rect x="2" y="3" width="10" height="8" rx="2" fill="#1f5fb0"/><path d="M5 4 H11 V10 H5 Z" fill="#f5d21c"/></svg>
<svg style="position:absolute;left:922px;top:176px;" width="16" height="15" viewBox="0 0 16 15"><circle cx="6" cy="6" r="4.8" fill="none" stroke="#2a5a9a" stroke-width="1.6"/><path d="M9.5 9.5 L14 14" stroke="#2a5a9a" stroke-width="2.2"/><path d="M6 3.5 V8.5 M3.5 6 H8.5" stroke="#2a5a9a" stroke-width="1.3"/></svg>
<svg style="position:absolute;left:946px;top:176px;" width="16" height="15" viewBox="0 0 16 15"><circle cx="6" cy="6" r="4.8" fill="none" stroke="#2a5a9a" stroke-width="1.6"/><path d="M9.5 9.5 L14 14" stroke="#2a5a9a" stroke-width="2.2"/><path d="M3.5 6 H8.5" stroke="#2a5a9a" stroke-width="1.3"/></svg>
<svg style="position:absolute;left:970px;top:175px;" width="17" height="16" viewBox="0 0 17 16"><rect x="0.5" y="6.5" width="7" height="8" fill="none" stroke="#2a5a9a" stroke-dasharray="1.5 1"/><circle cx="8" cy="6" r="4.8" fill="none" stroke="#2a5a9a" stroke-width="1.6"/><path d="M11.5 9.5 L16 14" stroke="#2a5a9a" stroke-width="2.2"/><path d="M8 3.5 V8.5 M5.5 6 H10.5" stroke="#2a5a9a" stroke-width="1.3"/></svg>
<svg style="position:absolute;left:994px;top:175px;" width="16" height="17" viewBox="0 0 16 17"><rect x="4.5" y="4.5" width="7" height="7" fill="#fff" stroke="#555"/><path d="M8 6 V10 M6 8 H10" stroke="#555"/><path d="M8 0 L9.5 2 H6.5 Z M8 16 L9.5 14 H6.5 Z M0 8 L2 6.5 V9.5 Z M16 8 L14 6.5 V9.5 Z" fill="#4a80c0"/></svg>
<svg style="position:absolute;left:1018px;top:175px;" width="16" height="16" viewBox="0 0 16 16"><rect x="0.5" y="0.5" width="15" height="15" fill="#fff" stroke="#555"/><path d="M8 5 V11 M5 8 H11" stroke="#555"/><path d="M8 1.5 L10 4 H6 Z M8 14.5 L10 12 H6 Z M1.5 8 L4 6 V10 Z M14.5 8 L12 6 V10 Z" fill="#4a80c0"/></svg>
<div style="position:absolute;left:1044px;top:175px;width:1px;height:16px;background:#c8ccd2"></div>
<svg style="position:absolute;left:1057px;top:175px;" width="18" height="15" viewBox="0 0 18 15"><path d="M7 1 V13" stroke="#3d7dd0" stroke-width="1.2"/><path d="M5 3 L7 0 L9 3" fill="#3d7dd0"/><path d="M7 13 L1 8" stroke="#3aa83a" stroke-width="1.2"/><path d="M7 13 L16 8" stroke="#e0306a" stroke-width="1.2"/><path d="M13 7 L17 7.5 L15 10 Z" fill="#e0306a"/><path d="M0 7 L2.5 6 L2 9 Z" fill="#3aa83a"/></svg>
<svg style="position:absolute;left:1082px;top:181px;" width="8" height="5" viewBox="0 0 8 5"><path d="M0 0 H8 L4 4.5 Z" fill="#111"/></svg>
<div style="position:absolute;left:1103px;top:175px;width:1px;height:16px;background:#c8ccd2"></div>
<svg style="position:absolute;left:1117px;top:176px;" width="17" height="13" viewBox="0 0 17 13"><rect x="0.5" y="2.5" width="16" height="10" rx="5" fill="#eee" stroke="#a9a9a9"/><path d="M5 10 L12 2 L14 4 L7 11 L4.5 11.5 Z" fill="#a9a9a9"/></svg>
<svg style="position:absolute;left:1141px;top:176px;" width="17" height="14" viewBox="0 0 17 14"><rect x="0.5" y="0.5" width="11" height="8" rx="4" fill="#ddd" stroke="#a9a9a9"/><rect x="4" y="4" width="13" height="9.5" rx="4.5" fill="#a9a9a9"/></svg>
<div style="position:absolute;left:1164px;top:174px;width:18px;height:18px;background:#c6e2fa;border:1px solid #3a85d0;border-radius:2px"></div>
<svg style="position:absolute;left:1166px;top:176px;" width="14" height="12" viewBox="0 0 14 12"><rect x="0" y="0" width="14" height="12" rx="3" fill="#0d4f96"/></svg>
<svg style="position:absolute;left:1189px;top:177px;" width="17" height="12" viewBox="0 0 17 12"><rect x="0.5" y="0.5" width="16" height="11" rx="5" fill="#f0f0f0" stroke="#a9a9a9"/><path d="M1 6 H16" stroke="#a9a9a9"/></svg>
<svg style="position:absolute;left:1213px;top:177px;" width="17" height="12" viewBox="0 0 17 12"><rect x="0.5" y="0.5" width="16" height="11" rx="5" fill="#f0f0f0" stroke="#a9a9a9" stroke-dasharray="2 1"/><path d="M1 6 H16" stroke="#a9a9a9"/></svg>
<svg style="position:absolute;left:1238px;top:176px;" width="17" height="15" viewBox="0 0 17 15"><rect x="0.5" y="2.5" width="13" height="11" fill="#a9a9a9"/><path d="M0.5 0.5 L16 15" stroke="#2a5a9a" stroke-width="1.3"/></svg>
<div style="position:absolute;left:1263px;top:175px;width:1px;height:16px;background:#c8ccd2"></div>
<svg style="position:absolute;left:1277px;top:175px;" width="17" height="15" viewBox="0 0 17 15"><rect x="0.5" y="6.5" width="16" height="8" rx="4" fill="#eee" stroke="#a9a9a9"/><rect x="4.5" y="0.5" width="8" height="7" fill="#fff" stroke="#a9a9a9" stroke-dasharray="1.5 1"/><rect x="6" y="2" width="5" height="4" fill="#a9a9a9"/></svg>
<svg style="position:absolute;left:1301px;top:175px;" width="17" height="15" viewBox="0 0 17 15"><rect x="0" y="6" width="17" height="9" rx="4.5" fill="#a9a9a9"/><rect x="4.5" y="0.5" width="8" height="8" fill="#ddd" stroke="#a9a9a9" stroke-dasharray="1.5 1"/></svg>
<svg style="position:absolute;left:1326px;top:175px;" width="16" height="16" viewBox="0 0 16 16"><rect x="0.5" y="0.5" width="13" height="13" fill="none" stroke="#a9a9a9" stroke-dasharray="2 1"/><rect x="3" y="3" width="7" height="7" fill="#ccc"/><path d="M8 8 L15 15 M8 8 V13 M8 8 H13" stroke="#a9a9a9" stroke-width="1.2"/></svg>
<svg style="position:absolute;left:1350px;top:175px;" width="16" height="16" viewBox="0 0 16 16"><rect x="0.5" y="0.5" width="13" height="13" fill="none" stroke="#a9a9a9" stroke-dasharray="2 1"/><path d="M4 4 L11 11 V4 Z" fill="#ccc"/><path d="M2 0 L8 15" stroke="#a9a9a9"/></svg>
<div style="position:absolute;left:1375px;top:175px;width:1px;height:16px;background:#c8ccd2"></div>
<svg style="position:absolute;left:1390px;top:177px;" width="15" height="12" viewBox="0 0 15 12"><path d="M0.5 6 C4 0.5 11 0.5 14.5 6 C11 11.5 4 11.5 0.5 6 Z" fill="#ccc"/><circle cx="7.5" cy="6" r="2.2" fill="#fff"/><path d="M2 1 L13 11" stroke="#445" stroke-width="1.3"/></svg>
<div style="position:absolute;left:1412px;top:174px;width:19px;height:19px;background:#cfe6fb;border:2px solid #1d4f8f;border-radius:2px"></div>
<svg style="position:absolute;left:1415px;top:178px;" width="13" height="10" viewBox="0 0 13 10"><path d="M0 1 H13" stroke="#1d4f8f" stroke-width="1.5"/><path d="M1 6 C4 2.5 9 2.5 12 6 C9 9.5 4 9.5 1 6 Z" fill="#1d4f8f"/><circle cx="6.5" cy="6" r="1.4" fill="#fff"/></svg>
<svg style="position:absolute;left:1437px;top:175px;" width="17" height="15" viewBox="0 0 17 15"><rect x="0.5" y="0.5" width="16" height="14" fill="#fff" stroke="#2a5a9a"/><path d="M0.5 2.5 H16" stroke="#2a5a9a"/><path d="M3 9 C6 5.5 11 5.5 14 9 C11 12.5 6 12.5 3 9 Z" fill="#ccc"/><path d="M4 5 L13 13" stroke="#445"/></svg>
<svg style="position:absolute;left:1461px;top:175px;" width="17" height="15" viewBox="0 0 17 15"><rect x="0.5" y="0.5" width="16" height="14" fill="#fff" stroke="#2a5a9a"/><path d="M0.5 2.5 H16" stroke="#2a5a9a"/><path d="M4 6 C6.5 3.5 10.5 3.5 13 6 C10.5 8.5 6.5 8.5 4 6 Z" fill="#2a5a9a"/><path d="M4 11 C6.5 8.5 10.5 8.5 13 11 C10.5 13.5 6.5 13.5 4 11 Z" fill="#bbb"/></svg>
<svg style="position:absolute;left:1485px;top:176px;" width="15" height="14" viewBox="0 0 15 14"><path d="M3 4 A5.5 5.5 0 1 1 2.5 9" fill="none" stroke="#2a5a9a" stroke-width="1.5"/><path d="M0.5 1.5 L5.5 4.5 L0.5 6.5 Z" fill="#2a5a9a"/></svg>
<div style="position:absolute;left:1512px;top:175px;width:1px;height:16px;background:#c8ccd2"></div>
<svg style="position:absolute;left:1525px;top:176px;" width="17" height="14" viewBox="0 0 17 14"><path d="M0 3 H4 L6 0.5 H11 L13 3 H17 V14 H0 Z" fill="#4a80c0"/><circle cx="8.5" cy="8" r="3.8" fill="#fff"/><circle cx="8.5" cy="8" r="2.5" fill="#4a80c0"/></svg>
<svg style="position:absolute;left:922px;top:195px;" width="16" height="16" viewBox="0 0 16 16"><rect x="3.5" y="0.5" width="9" height="5" fill="#fff" stroke="#4a80c0"/><rect x="0" y="5" width="16" height="7" rx="1.5" fill="#4a80c0"/><rect x="3.5" y="11.5" width="9" height="4" fill="#fff" stroke="#4a80c0"/><rect x="11" y="8" width="1.5" height="1.5" fill="#fff"/><rect x="13" y="8" width="1.5" height="1.5" fill="#fff"/></svg>
<svg style="position:absolute;left:1577px;top:177px;" width="12" height="12" viewBox="0 0 12 12"><path d="M6 1 V11 M1 6 H11" stroke="#3a78c4" stroke-width="2.5"/></svg>
<div class="t" style="left:1595px;top:175px;font-size:12.5px">Add to Component</div>
<svg style="position:absolute;left:1705px;top:181px;" width="8" height="5" viewBox="0 0 8 5"><path d="M0 0 H9 L4.5 5 Z" fill="#222"/></svg>
<svg style="position:absolute;left:1727px;top:177px;" width="12" height="12" viewBox="0 0 12 12"><path d="M6 1 V11 M1 6 H11" stroke="#3a78c4" stroke-width="2.5"/></svg>
<div class="t" style="left:1745px;top:175px;font-size:12.5px">Add to Selection</div>
<div style="position:absolute;left:1573px;top:197px;width:274px;height:20px;background:#fff;border:1px solid #d0d0d0"></div>
<div style="position:absolute;left:1853px;top:197px;width:60px;height:20px;background:linear-gradient(#f6f6f6,#e2e2e2);border:1px solid #acacac;border-radius:2px"></div>
<div class="t c" style="left:1733px;top:199px;">Search</div>
<div style="position:absolute;left:1623px;top:241px;width:121px;height:17px;background:#d9d9d9"></div>
<svg style="position:absolute;left:1591px;top:229px;" width="7" height="7" viewBox="0 0 7 7"><path d="M6.5 0 L6.5 6 L0 6 Z" fill="#3c3c3c"/></svg>
<div class="t" style="left:1625px;top:225px;">Recent Materials</div>
<svg style="position:absolute;left:1624px;top:241px;" width="16" height="16" viewBox="0 0 16 16"><rect x="6" y="1" width="4" height="4" fill="#f8ab1c"/><rect x="6" y="6" width="4" height="4" fill="#f39a18"/><rect x="6" y="11" width="4" height="4" fill="#d27212"/><rect x="1" y="4" width="4" height="4" fill="#f8a81a"/><rect x="1" y="9" width="4" height="4" fill="#ef8c1a"/><rect x="11" y="4" width="4" height="4" fill="#f2941a"/><rect x="11" y="9" width="4" height="4" fill="#d87818"/></svg>
<div class="t" style="left:1645px;top:242px;">Titanium beta-21S</div>
<svg style="position:absolute;left:1594px;top:262px;" width="7" height="9" viewBox="0 0 7 9"><path d="M1 0.8 L5.5 4.5 L1 8.2 Z" fill="none" stroke="#c4c4c4" stroke-width="1.3"/></svg>
<div class="t" style="left:1625px;top:259px;">Material Library</div>
<svg style="position:absolute;left:1594px;top:279px;" width="7" height="9" viewBox="0 0 7 9"><path d="M1 0.8 L5.5 4.5 L1 8.2 Z" fill="none" stroke="#c4c4c4" stroke-width="1.3"/></svg>
<div class="t" style="left:1625px;top:276px;">Built-In</div>
<svg style="position:absolute;left:1594px;top:296px;" width="7" height="9" viewBox="0 0 7 9"><path d="M1 0.8 L5.5 4.5 L1 8.2 Z" fill="none" stroke="#c4c4c4" stroke-width="1.3"/></svg>
<div class="t" style="left:1625px;top:293px;">AC/DC</div>
<svg style="position:absolute;left:1594px;top:313px;" width="7" height="9" viewBox="0 0 7 9"><path d="M1 0.8 L5.5 4.5 L1 8.2 Z" fill="none" stroke="#c4c4c4" stroke-width="1.3"/></svg>
<div class="t" style="left:1625px;top:310px;">Batteries and Fuel Cells</div>
<svg style="position:absolute;left:1594px;top:330px;" width="7" height="9" viewBox="0 0 7 9"><path d="M1 0.8 L5.5 4.5 L1 8.2 Z" fill="none" stroke="#c4c4c4" stroke-width="1.3"/></svg>
<div class="t" style="left:1625px;top:327px;">Bioheat</div>
<svg style="position:absolute;left:1594px;top:347px;" width="7" height="9" viewBox="0 0 7 9"><path d="M1 0.8 L5.5 4.5 L1 8.2 Z" fill="none" stroke="#c4c4c4" stroke-width="1.3"/></svg>
<div class="t" style="left:1625px;top:344px;">Equilibrium Discharge</div>
<svg style="position:absolute;left:1594px;top:364px;" width="7" height="9" viewBox="0 0 7 9"><path d="M1 0.8 L5.5 4.5 L1 8.2 Z" fill="none" stroke="#c4c4c4" stroke-width="1.3"/></svg>
<div class="t" style="left:1625px;top:361px;">Liquids and Gases</div>
<svg style="position:absolute;left:1594px;top:381px;" width="7" height="9" viewBox="0 0 7 9"><path d="M1 0.8 L5.5 4.5 L1 8.2 Z" fill="none" stroke="#c4c4c4" stroke-width="1.3"/></svg>
<div class="t" style="left:1625px;top:378px;">MEMS</div>
<svg style="position:absolute;left:1594px;top:398px;" width="7" height="9" viewBox="0 0 7 9"><path d="M1 0.8 L5.5 4.5 L1 8.2 Z" fill="none" stroke="#c4c4c4" stroke-width="1.3"/></svg>
<div class="t" style="left:1625px;top:395px;">Nonlinear Magnetic</div>
<svg style="position:absolute;left:1594px;top:415px;" width="7" height="9" viewBox="0 0 7 9"><path d="M1 0.8 L5.5 4.5 L1 8.2 Z" fill="none" stroke="#c4c4c4" stroke-width="1.3"/></svg>
<div class="t" style="left:1625px;top:412px;">Optical</div>
<svg style="position:absolute;left:1594px;top:432px;" width="7" height="9" viewBox="0 0 7 9"><path d="M1 0.8 L5.5 4.5 L1 8.2 Z" fill="none" stroke="#c4c4c4" stroke-width="1.3"/></svg>
<div class="t" style="left:1625px;top:429px;">Piezoelectric</div>
<svg style="position:absolute;left:1594px;top:449px;" width="7" height="9" viewBox="0 0 7 9"><path d="M1 0.8 L5.5 4.5 L1 8.2 Z" fill="none" stroke="#c4c4c4" stroke-width="1.3"/></svg>
<div class="t" style="left:1625px;top:446px;">Piezoresistivity</div>
<svg style="position:absolute;left:1594px;top:466px;" width="7" height="9" viewBox="0 0 7 9"><path d="M1 0.8 L5.5 4.5 L1 8.2 Z" fill="none" stroke="#c4c4c4" stroke-width="1.3"/></svg>
<div class="t" style="left:1625px;top:463px;">Semiconductors</div>
<svg style="position:absolute;left:1594px;top:483px;" width="7" height="9" viewBox="0 0 7 9"><path d="M1 0.8 L5.5 4.5 L1 8.2 Z" fill="none" stroke="#c4c4c4" stroke-width="1.3"/></svg>
<div class="t" style="left:1625px;top:480px;">Thermoelectric</div>
<svg style="position:absolute;left:1594px;top:500px;" width="7" height="9" viewBox="0 0 7 9"><path d="M1 0.8 L5.5 4.5 L1 8.2 Z" fill="none" stroke="#c4c4c4" stroke-width="1.3"/></svg>
<div class="t" style="left:1625px;top:497px;">User-Defined Library</div>
<svg style="position:absolute;left:1605px;top:224px;" width="18" height="17" viewBox="0 0 18 17"><rect x="6" y="1" width="3.8" height="3.8" rx=".5" fill="#f9a81a"/><rect x="1" y="4" width="3.8" height="3.8" rx=".5" fill="#f9a510"/><rect x="11" y="4" width="3.8" height="3.8" rx=".5" fill="#f58a10"/><rect x="6" y="6" width="3.8" height="3.8" rx=".5" fill="#f28a18"/><rect x="11" y="9" width="3.8" height="3.8" rx=".5" fill="#cc6a10"/><path d="M0 12.5 L4.5 8.8 V11 H10 V14 H4.5 V16.2 Z" fill="#dc5a38"/></svg>
<svg style="position:absolute;left:1605px;top:258px;" width="18" height="16" viewBox="0 0 18 16"><rect x="1.5" y="0.5" width="14" height="15" fill="#2d5fa8"/><rect x="3" y="2" width="2.5" height="12.5" fill="#40b0f0"/><rect x="6.3" y="2" width="2.5" height="12.5" fill="#f08c1a"/><rect x="9.6" y="2" width="2.5" height="12.5" fill="#50b848"/><rect x="12.6" y="2" width="2.4" height="12.5" fill="#e0208a"/><path d="M4.2 4 V5 M7.5 4 V5 M10.8 4 V5 M13.8 4 V5" stroke="#fff" stroke-width="1"/></svg>
<svg style="position:absolute;left:1605px;top:275px;" width="18" height="16" viewBox="0 0 18 16"><rect x="0.5" y="1.5" width="15" height="12" rx="3" fill="#1a3f8a"/><rect x="2" y="3" width="12" height="9" rx="2" fill="#2f7fe0"/><path d="M3.5 4 H9 L7 11 H3.5 Z" fill="#f8e040"/><path d="M9 4 H13 V11 H7 Z" fill="#60c0f8"/></svg>
<svg style="position:absolute;left:1605px;top:292px;" width="18" height="16" viewBox="0 0 18 16"><rect x="2" y="1" width="13.5" height="14" fill="#e4e8ee"/><rect x="2.5" y="1.5" width="3" height="13" fill="#d6eefa"/><rect x="5.8" y="1.5" width="3" height="13" fill="#fde6c4"/><rect x="9.1" y="1.5" width="3" height="13" fill="#e2f4d4"/><rect x="12.4" y="1.5" width="2.8" height="13" fill="#f8d6ea"/><path d="M1 0 L10 4.5 L7.5 5.5 L13.5 9 L10.5 10 L15 15.5 L5 10 L8 9 L2.5 5.5 L5.5 4.5 Z" fill="#3a6fb5"/></svg>
<svg style="position:absolute;left:1605px;top:309px;" width="18" height="16" viewBox="0 0 18 16"><rect x="2" y="1" width="13.5" height="14" fill="#e4e8ee"/><rect x="2.5" y="1.5" width="3" height="13" fill="#d6eefa"/><rect x="5.8" y="1.5" width="3" height="13" fill="#fde6c4"/><rect x="9.1" y="1.5" width="3" height="13" fill="#e2f4d4"/><rect x="12.4" y="1.5" width="2.8" height="13" fill="#f8d6ea"/><rect x="3" y="5" width="12.5" height="6" rx="1.5" fill="#e2e2e2" stroke="#777" stroke-width="1.2"/><rect x="1" y="6.8" width="2" height="2.4" fill="#fff" stroke="#777" stroke-width=".8"/><rect x="4.3" y="6.3" width="1.4" height="3.4" fill="#d0104a"/><rect x="12.5" y="6.3" width="1.4" height="3.4" fill="#3a6fb5"/></svg>
<svg style="position:absolute;left:1605px;top:326px;" width="18" height="16" viewBox="0 0 18 16"><rect x="2" y="1" width="13.5" height="14" fill="#e4e8ee"/><rect x="2.5" y="1.5" width="3" height="13" fill="#d6eefa"/><rect x="5.8" y="1.5" width="3" height="13" fill="#fde6c4"/><rect x="9.1" y="1.5" width="3" height="13" fill="#e2f4d4"/><rect x="12.4" y="1.5" width="2.8" height="13" fill="#f8d6ea"/><rect x="2" y="1.8" width="13" height="12.5" rx="2.5" fill="#4a80c0"/><path d="M3.5 13 L8.5 4 L10.5 3.5 L12.5 13 Z" fill="#f5b800"/><path d="M3 14 L6 10 L13 11 L14 14 Z" fill="#30b860"/><path d="M3 14 L5 12 L14 12.5 L14 14 Z" fill="#30a8d8"/><circle cx="9" cy="6" r="1.3" fill="#e85a20"/></svg>
<svg style="position:absolute;left:1605px;top:343px;" width="18" height="16" viewBox="0 0 18 16"><rect x="2" y="1" width="13.5" height="14" fill="#e4e8ee"/><rect x="2.5" y="1.5" width="3" height="13" fill="#d6eefa"/><rect x="5.8" y="1.5" width="3" height="13" fill="#fde6c4"/><rect x="9.1" y="1.5" width="3" height="13" fill="#e2f4d4"/><rect x="12.4" y="1.5" width="2.8" height="13" fill="#f8d6ea"/><text x="0" y="12.5" font-size="12.5" fill="#2d5a98" font-family="Liberation Sans">&#916;u</text></svg>
<svg style="position:absolute;left:1605px;top:360px;" width="18" height="16" viewBox="0 0 18 16"><rect x="2" y="1" width="13.5" height="14" fill="#e4e8ee"/><rect x="2.5" y="1.5" width="3" height="13" fill="#d6eefa"/><rect x="5.8" y="1.5" width="3" height="13" fill="#fde6c4"/><rect x="9.1" y="1.5" width="3" height="13" fill="#e2f4d4"/><rect x="12.4" y="1.5" width="2.8" height="13" fill="#f8d6ea"/><path d="M2.5 6 C1 9 0.5 10.5 2.5 11.5 C4.5 10.5 4 9 2.5 6 Z" fill="#3a78c0"/><path d="M6 4.5 C8 3 10 6 12 4.5 C13 3.8 14 3.5 15 4 M6 8 C8 6.5 10 9.5 12 8 C13 7.3 14 7 15 7.5 M6 11.5 C8 10 10 13 12 11.5 C13 10.8 14 10.5 15 11" fill="none" stroke="#2d5a98" stroke-width="1.1"/></svg>
<svg style="position:absolute;left:1605px;top:377px;" width="18" height="16" viewBox="0 0 18 16"><rect x="2" y="1" width="13.5" height="14" fill="#e4e8ee"/><rect x="2.5" y="1.5" width="3" height="13" fill="#d6eefa"/><rect x="5.8" y="1.5" width="3" height="13" fill="#fde6c4"/><rect x="9.1" y="1.5" width="3" height="13" fill="#e2f4d4"/><rect x="12.4" y="1.5" width="2.8" height="13" fill="#f8d6ea"/><path d="M5.5 4 V14 M5.5 10 C5.5 12.5 10.5 12.5 10.5 10 V4 M10.5 11 C10.5 12 11.5 12 12 11.5" fill="none" stroke="#3a5a88" stroke-width="1.3"/></svg>
<svg style="position:absolute;left:1605px;top:394px;" width="18" height="16" viewBox="0 0 18 16"><rect x="2" y="1" width="13.5" height="14" fill="#e4e8ee"/><rect x="2.5" y="1.5" width="3" height="13" fill="#d6eefa"/><rect x="5.8" y="1.5" width="3" height="13" fill="#fde6c4"/><rect x="9.1" y="1.5" width="3" height="13" fill="#e2f4d4"/><rect x="12.4" y="1.5" width="2.8" height="13" fill="#f8d6ea"/><path d="M2.5 12 V7.5 A6 6 0 0 1 14.5 7.5 V12 H11 V7.5 A2.5 2.5 0 0 0 6 7.5 V12 Z" fill="#d0103a"/><rect x="2.5" y="11.5" width="3.5" height="2.5" fill="#999"/><rect x="11" y="11.5" width="3.5" height="2.5" fill="#999"/></svg>
<svg style="position:absolute;left:1605px;top:411px;" width="18" height="16" viewBox="0 0 18 16"><rect x="2" y="1" width="13.5" height="14" fill="#e4e8ee"/><rect x="2.5" y="1.5" width="3" height="13" fill="#d6eefa"/><rect x="5.8" y="1.5" width="3" height="13" fill="#fde6c4"/><rect x="9.1" y="1.5" width="3" height="13" fill="#e2f4d4"/><rect x="12.4" y="1.5" width="2.8" height="13" fill="#f8d6ea"/><path d="M0.5 3 V13 M2.5 5 V11 M0.5 8 H5" stroke="#3a6fb5" stroke-width=".9"/><ellipse cx="7" cy="8" rx="2.3" ry="7" fill="#a8d8f4" stroke="#3a6fb5" stroke-width="1.1"/><path d="M11 6 C12 7 12 9 11 10 M13 4.5 C14.5 6.5 14.5 9.5 13 11.5" fill="none" stroke="#3a6fb5" stroke-width=".9"/><circle cx="15" cy="8" r=".8" fill="#3a6fb5"/></svg>
<svg style="position:absolute;left:1605px;top:428px;" width="18" height="16" viewBox="0 0 18 16"><rect x="2" y="1" width="13.5" height="14" fill="#e4e8ee"/><rect x="2.5" y="1.5" width="3" height="13" fill="#d6eefa"/><rect x="5.8" y="1.5" width="3" height="13" fill="#fde6c4"/><rect x="9.1" y="1.5" width="3" height="13" fill="#e2f4d4"/><rect x="12.4" y="1.5" width="2.8" height="13" fill="#f8d6ea"/><path d="M5 0 L12 3.5 L10 4.5 L15 8 L12.5 8.8 L15.5 12 L8 8 L10.5 7 L6 4 L8.5 3.5 Z" fill="#3a6fb5"/><path d="M4.5 9 C3.5 10.5 3.5 12.5 4.5 14 M6.5 8.5 C5.3 10.5 5.3 12.5 6.5 14.5 M2.5 10 C2 11 2 12 2.5 13" fill="none" stroke="#3a6fb5" stroke-width=".9"/></svg>
<svg style="position:absolute;left:1605px;top:445px;" width="18" height="16" viewBox="0 0 18 16"><rect x="2" y="1" width="13.5" height="14" fill="#e4e8ee"/><rect x="2.5" y="1.5" width="3" height="13" fill="#d6eefa"/><rect x="5.8" y="1.5" width="3" height="13" fill="#fde6c4"/><rect x="9.1" y="1.5" width="3" height="13" fill="#e2f4d4"/><rect x="12.4" y="1.5" width="2.8" height="13" fill="#f8d6ea"/><path d="M0 0 L9 4 L6.5 5 L13 8.5 L10 9.5 L14 12 L4.5 8.5 L7.5 7.5 L2.5 4.5 L5 3.8 Z" fill="#3a6fb5"/><rect x="0.8" y="10.8" width="15" height="4.4" fill="#ddd" stroke="#777" stroke-width="1.1"/></svg>
<svg style="position:absolute;left:1605px;top:462px;" width="18" height="16" viewBox="0 0 18 16"><rect x="2" y="1" width="13.5" height="14" fill="#e4e8ee"/><rect x="2.5" y="1.5" width="3" height="13" fill="#d6eefa"/><rect x="5.8" y="1.5" width="3" height="13" fill="#fde6c4"/><rect x="9.1" y="1.5" width="3" height="13" fill="#e2f4d4"/><rect x="12.4" y="1.5" width="2.8" height="13" fill="#f8d6ea"/><rect x="2.8" y="3.8" width="12" height="8.4" fill="#e2e2e2" stroke="#3a6fb5" stroke-width="1.2"/><path d="M5.5 1 V3.5 M8.8 1 V3.5 M12 1 V3.5 M5.5 12.5 V15 M8.8 12.5 V15 M12 12.5 V15" stroke="#3a6fb5" stroke-width="1.1"/></svg>
<svg style="position:absolute;left:1605px;top:479px;" width="18" height="16" viewBox="0 0 18 16"><rect x="2" y="1" width="13.5" height="14" fill="#e4e8ee"/><rect x="2.5" y="1.5" width="3" height="13" fill="#d6eefa"/><rect x="5.8" y="1.5" width="3" height="13" fill="#fde6c4"/><rect x="9.1" y="1.5" width="3" height="13" fill="#e2f4d4"/><rect x="12.4" y="1.5" width="2.8" height="13" fill="#f8d6ea"/><path d="M0 4 L8 8 L5.5 9 L11 12 L8.5 12.8 L11 15.5 L3.5 11.5 L6 10.5 L1.5 7.5 L4 6.8 Z" fill="#3a6fb5"/><path d="M12.5 0.5 C10.5 3.5 14 5.5 12 9 C11 11 12.5 12.5 12 15 M15 1.5 C13.5 4 16.5 6 15 9" fill="none" stroke="#f08c1a" stroke-width="1.2"/></svg>
<svg style="position:absolute;left:1605px;top:496px;" width="18" height="16" viewBox="0 0 18 16"><rect x="1.5" y="0.5" width="14" height="15" fill="#2d5fa8"/><rect x="3" y="2" width="2.5" height="12.5" fill="#40b0f0"/><rect x="6.3" y="2" width="2.5" height="12.5" fill="#f08c1a"/><rect x="9.6" y="2" width="2.5" height="12.5" fill="#50b848"/><rect x="12.6" y="2" width="2.4" height="12.5" fill="#e0208a"/><circle cx="4.5" cy="10" r="2.3" fill="#fff" stroke="#2d5a98" stroke-width="1"/><path d="M0.5 15.5 C0.8 12.5 8.2 12.5 8.5 15.5 Z" fill="#fff" stroke="#2d5a98" stroke-width="1"/></svg>
<div style="position:absolute;left:916px;top:861px;width:1000px;height:1px;background:#d0d1d4"></div>
<div style="position:absolute;left:1064px;top:838px;width:31px;height:23px;background:#e8e8e8"></div>
<div class="t" style="left:1071px;top:843px;font-size:12.5px">Log</div>
<div style="position:absolute;left:1103px;top:838px;width:40px;height:23px;background:#e8e8e8"></div>
<div class="t" style="left:1107px;top:843px;font-size:12.5px">Table</div>
<div style="position:absolute;left:920px;top:890px;width:992px;height:234px;background:#f9fafe;border:1px solid #d0d1d4"></div>
<div class="t" style="left:1083px;top:891px;">2</div>
<div class="t" style="left:1088px;top:906px;">is up to date.</div>
<div class="t" style="left:1087px;top:921px;">in, 4 boundaries, and 4 vertices.</div>
<div style="position:absolute;left:487px;top:784px;width:600px;height:300px;background:#fff;border-right:2px solid #6a6a6a;border-bottom:2px solid #6a6a6a"></div>
<div style="position:absolute;left:492px;top:787px;width:586px;height:290px;background:#fff;border:1px solid #d0d0d0"></div>
<div style="position:absolute;left:1060px;top:788px;width:17px;height:288px;background:#ececec;border-left:1px solid #e0e0e0"></div>
<svg style="position:absolute;left:1065px;top:792px;" width="8" height="5" viewBox="0 0 8 5"><path d="M0 5 L4 0.5 L8 5 Z" fill="#606060"/></svg>
<svg style="position:absolute;left:1065px;top:1064px;" width="8" height="5" viewBox="0 0 8 5"><path d="M0 0 L4 4.5 L8 0 Z" fill="#606060"/></svg>
<div style="position:absolute;left:1063px;top:805px;width:13px;height:150px;background:linear-gradient(90deg,#e8e8e8,#d4d4d4);border:1px solid #bcbcbc;border-radius:2px"></div>
<svg style="position:absolute;left:1065px;top:876px;" width="8" height="7" viewBox="0 0 8 7"><path d="M0 0.5 H8 M0 3 H8 M0 5.5 H8" stroke="#777"/></svg>
<div style="position:absolute;left:522px;top:790px;width:186px;height:17px;background:#d9d9d9"></div>
<div style="position:absolute;left:488px;top:787px;width:572px;height:287px;overflow:hidden">
<div class="t" style="left:39px;top:4px">ec.Ey - Electric field, y component</div>
<svg style="position:absolute;left:21px;top:25px" width="7" height="7"><path d="M6.5 0.5 L6.5 6.5 L0.5 6.5 Z" fill="#3c3c3c"/></svg>
<div class="t" style="left:39px;top:21px">Component 1 (comp1)</div>
<svg style="position:absolute;left:40px;top:42px" width="7" height="7"><path d="M6.5 0.5 L6.5 6.5 L0.5 6.5 Z" fill="#3c3c3c"/></svg>
<div class="t" style="left:58px;top:38px">Electric Currents</div>
<svg style="position:absolute;left:61px;top:58px" width="7" height="9"><path d="M1 0.8 L5.5 4.5 L1 8.2 Z" fill="none" stroke="#c4c4c4" stroke-width="1.3"/></svg>
<div class="t" style="left:77px;top:55px">Currents and charge</div>
<svg style="position:absolute;left:59px;top:76px" width="7" height="7"><path d="M6.5 0.5 L6.5 6.5 L0.5 6.5 Z" fill="#3c3c3c"/></svg>
<div class="t" style="left:77px;top:72px">Electric</div>
<svg style="position:absolute;left:80px;top:92px" width="7" height="9"><path d="M1 0.8 L5.5 4.5 L1 8.2 Z" fill="none" stroke="#c4c4c4" stroke-width="1.3"/></svg>
<div class="t" style="left:96px;top:89px">Electric displacement field</div>
<svg style="position:absolute;left:78px;top:110px" width="7" height="7"><path d="M6.5 0.5 L6.5 6.5 L0.5 6.5 Z" fill="#3c3c3c"/></svg>
<div class="t" style="left:96px;top:106px">Electric field</div>
<div class="t" style="left:115px;top:123px">ec.Ex - Electric field, x component</div>
<div class="t" style="left:115px;top:140px">ec.Ey - Electric field, y component</div>
<div class="t" style="left:115px;top:157px">ec.Ez - Electric field, z component</div>
<svg style="position:absolute;left:80px;top:177px" width="7" height="9"><path d="M1 0.8 L5.5 4.5 L1 8.2 Z" fill="none" stroke="#c4c4c4" stroke-width="1.3"/></svg>
<div class="t" style="left:96px;top:174px">Polarization</div>
<div class="t" style="left:96px;top:191px">ec.normD - Electric displacement field norm</div>
<div class="t" style="left:96px;top:208px">ec.normE - Electric field norm</div>
<div class="t" style="left:96px;top:225px">ec.normP - Polarization norm</div>
<div class="t" style="left:96px;top:242px">V - Electric potential</div>
<svg style="position:absolute;left:61px;top:262px" width="7" height="9"><path d="M1 0.8 L5.5 4.5 L1 8.2 Z" fill="none" stroke="#c4c4c4" stroke-width="1.3"/></svg>
<div class="t" style="left:77px;top:259px">Energy and power</div>
<svg style="position:absolute;left:61px;top:279px" width="7" height="9"><path d="M1 0.8 L5.5 4.5 L1 8.2 Z" fill="none" stroke="#c4c4c4" stroke-width="1.3"/></svg>
<div class="t" style="left:77px;top:276px">Global</div>
</div>
<div class="t" style="left:540px;top:767px;color:#22b14c;font-weight:bold;font-size:22px;line-height:26px;height:26px;top:761px">Ctrl+Space</div>
<div style="position:absolute;left:502px;top:890px;width:535px;height:77px;border:5px solid #22b14c"></div>
<div style="position:absolute;left:609px;top:779px;width:2px;height:9px;background:#22b14c"></div>
<svg style="position:absolute;left:570px;top:785px;" width="84" height="96" viewBox="0 0 84 96"><path d="M22.5 48.5 V4.5 H61.4 V48.5 H80 L42.7 91 L4 48.5 Z" fill="none" stroke="#22b14c" stroke-width="4.6" stroke-linejoin="round"/></svg>
<div class="t" style="left:36px;top:60px;color:#4a9a3a;font-size:28px;line-height:30px;height:30px;top:52px;font-weight:normal">A</div>
<div class="t c" style="left:-106px;top:85px;color:#000">Application</div>
<div class="t c" style="left:-106px;top:98px;color:#000">Builder</div>
<svg style="position:absolute;left:84px;top:52px;" width="17" height="17" viewBox="0 0 17 17"><path d="M0.5 3 C2 0.5 3 1 5 4" fill="none" stroke="#555" stroke-width="1"/><circle cx="8" cy="4.5" r="2.5" fill="none" stroke="#555"/><circle cx="13" cy="4" r="2.5" fill="none" stroke="#555"/><rect x="6.5" y="9.5" width="9" height="7" fill="#fff" stroke="#555"/><path d="M8.5 12 H13.5 M8.5 14 H13.5" stroke="#555"/></svg>
<div class="t" style="left:102px;top:51px;">Model Data Access</div>
<svg style="position:absolute;left:84px;top:73px;" width="14" height="18" viewBox="0 0 14 18"><rect x="0.5" y="0.5" width="11" height="15" fill="#fff" stroke="#666"/><path d="M0.5 3 H11.5 M3 6 H9 M3 8.5 H9" stroke="#777"/><circle cx="9.5" cy="13" r="3.5" fill="#3aa83a"/></svg>
<div class="t" style="left:102px;top:73px;">Record a New Method</div>
<svg style="position:absolute;left:88px;top:97px;" width="10" height="12" viewBox="0 0 10 12"><path d="M0.5 0.5 L9 6 L0.5 11.5 Z" fill="#3aa83a"/></svg>
<div class="t" style="left:102px;top:95px;">Test Application</div>
<svg style="position:absolute;left:260px;top:55px;" width="30" height="26" viewBox="0 0 30 26"><path d="M2 10 C2 1 26 0 28 8 C30 16 27 25 22 25 C17 25 17 19 11 19 C5 19 2 17 2 10 Z" fill="#3f7bc0"/><text x="14.5" y="14" font-size="10" fill="#fff" text-anchor="middle" font-family="Liberation Sans" font-weight="bold">&#937;</text></svg>
<div class="t c" style="left:124px;top:85px;color:#000">Component</div>
<div class="t c" style="left:124px;top:98px;color:#000">1 (comp1)<svg width="7" height="4" style="vertical-align:middle;margin-left:3px;position:relative;top:-1px"><path d="M0 0 H7 L3.5 4 Z" fill="#222"/></svg></div>
<svg style="position:absolute;left:337px;top:55px;" width="30" height="26" viewBox="0 0 30 26"><path d="M0.5 12 L9.5 1 H19.5 L28.5 12 L19.5 23 H9.5 Z" fill="none" stroke="#4a80c0" stroke-width="1.1"/><path d="M9.5 1 L14.5 7 L19.5 1 M14.5 7 L19.5 12 L14.5 17 L9.5 12 Z M0.5 12 H9.5 M19.5 12 H28.5 M14.5 17 L9.5 23 M14.5 17 L19.5 23" fill="none" stroke="#4a80c0" stroke-width=".8"/></svg>
<div class="t c" style="left:201px;top:85px;color:#000">Add</div>
<div class="t c" style="left:201px;top:98px;color:#000">Component<svg width="7" height="4" style="vertical-align:middle;margin-left:3px;position:relative;top:-1px"><path d="M0 0 H7 L3.5 4 Z" fill="#222"/></svg></div>
<div class="t" style="left:409px;top:51px;color:#3a6aa8;font-size:13px">P<sub style='font-size:9px'>i</sub></div>
<div class="t" style="left:427px;top:51px;">Parameters</div>
<div class="t" style="left:409px;top:73px;color:#3a6aa8;font-size:12px">a=</div>
<div class="t" style="left:427px;top:73px;">Variables<svg width="7" height="4" style="vertical-align:middle;margin-left:3px;position:relative;top:-1px"><path d="M0 0 H7 L3.5 4 Z" fill="#222"/></svg></div>
<div class="t" style="left:409px;top:95px;color:#3a6aa8;font-size:11.5px;letter-spacing:-.3px">f(x)</div>
<div class="t" style="left:427px;top:95px;">Functions<svg width="7" height="4" style="vertical-align:middle;margin-left:3px;position:relative;top:-1px"><path d="M0 0 H7 L3.5 4 Z" fill="#222"/></svg></div>
<svg style="position:absolute;left:516px;top:58px;" width="22" height="22" viewBox="0 0 22 22"><path d="M0.5 3.5 L3 1 H21 L19 3.5 Z" fill="#f0a080"/><path d="M0.5 3.5 L3 1 V17.5 L1.5 19.5 Z" fill="#c94a2a"/><rect x="2.5" y="2" width="18.5" height="18" fill="#e0603a"/><path d="M11.5 2 V20 M2.5 11 H21" stroke="#f8c0a8" stroke-width="1"/></svg>
<div class="t c" style="left:377px;top:85px;color:#000">Build</div>
<div class="t c" style="left:377px;top:98px;color:#000">All</div>
<svg style="position:absolute;left:552px;top:52px;" width="17" height="15" viewBox="0 0 17 15"><rect x="0.5" y="0.5" width="15" height="13" fill="#fff" stroke="#444"/><path d="M0.5 3 H15.5 M3 3 V13.5" stroke="#444"/><path d="M16 8 H7 M10 5 L7 8 L10 11" fill="none" stroke="#e03a2a" stroke-width="1.5"/></svg>
<div class="t" style="left:570px;top:51px;">Import</div>
<svg style="position:absolute;left:552px;top:74px;" width="17" height="15" viewBox="0 0 17 15"><path d="M3 4 H13 L11 2 M13 11 H3 L5 13 M2 4 V9 M14 6 V11" fill="none" stroke="#f2b8a8" stroke-width="2"/></svg>
<div class="t" style="left:570px;top:73px;color:#bdbdbd">LiveLink<svg width="7" height="4" style="vertical-align:middle;margin-left:3px;position:relative;top:-1px"><path d="M0 0 H7 L3.5 4 Z" fill="#c8c8c8"/></svg></div>
<div style="position:absolute;left:641px;top:49px;width:51px;height:66px;background:#aad6fa;border:1px solid #3d95e6"></div>
<svg style="position:absolute;left:657px;top:57px;" width="20" height="24" viewBox="0 0 20 24"><rect x="7" y="0" width="6" height="6" rx="1.2" fill="#f9b020"/><rect x="7" y="7" width="6" height="6" rx="1.2" fill="#f29418"/><rect x="7" y="14" width="6" height="6" rx="1.2" fill="#d27212"/><rect x="0" y="4" width="6" height="6" rx="1.2" fill="#f9a820"/><rect x="0" y="11" width="6" height="6" rx="1.2" fill="#f29418"/><rect x="14" y="4" width="6" height="6" rx="1.2" fill="#f39a20"/><rect x="14" y="11" width="6" height="6" rx="1.2" fill="#dd8030"/></svg>
<svg style="position:absolute;left:671px;top:70px;" width="15" height="16" viewBox="0 0 15 16"><path d="M5 1.5 H9 V8 H13 L7 13.5 L1 8 H5 Z" fill="#3a444e"/><path d="M1 14.8 H13" stroke="#3a444e" stroke-width="1.4"/></svg>
<div class="t c" style="left:516px;top:85px;color:#000">Add</div>
<div class="t c" style="left:516px;top:98px;color:#000">Material</div>
<svg style="position:absolute;left:733px;top:53px;" width="32" height="28" viewBox="0 0 32 28"><path d="M1 0 L21 11.5 L15.5 13 L27 27 L8 14.5 L13.5 13 Z" fill="#3d80d8"/><path d="M7 23.5 H12 M9.5 21 V26" stroke="#d8204a" stroke-width="1.3"/><path d="M27 23.5 H32" stroke="#3d80d8" stroke-width="1.3"/></svg>
<div class="t c" style="left:596px;top:85px;color:#000">Electric</div>
<div class="t c" style="left:596px;top:98px;color:#000">Currents (ec)<svg width="7" height="4" style="vertical-align:middle;margin-left:3px;position:relative;top:-1px"><path d="M0 0 H7 L3.5 4 Z" fill="#222"/></svg></div>
<svg style="position:absolute;left:800px;top:52px;" width="32" height="33" viewBox="0 0 32 33"><ellipse cx="13" cy="15" rx="12" ry="5" fill="none" stroke="#6f8fae" stroke-width="1" transform="rotate(30 13 15)"/><ellipse cx="13" cy="15" rx="12" ry="5" fill="none" stroke="#6f8fae" stroke-width="1" transform="rotate(-30 13 15)"/><ellipse cx="13" cy="15" rx="5" ry="13" fill="none" stroke="#6f8fae" stroke-width="1"/><circle cx="13" cy="15" r="2.2" fill="#1d5aa6"/><circle cx="4" cy="8" r="1.8" fill="#1d5aa6"/><circle cx="23" cy="12" r="1.8" fill="#1d5aa6"/><circle cx="9" cy="24" r="1.8" fill="#1d5aa6"/><circle cx="20" cy="22" r="1.8" fill="#1d5aa6"/><path d="M22.5 19.5 H26.5 V25 H30 L24.5 30 L19 25 H22.5 Z" fill="#555f6a"/><path d="M18.5 31.3 H30" stroke="#555f6a" stroke-width="1.3"/></svg>
<div class="t c" style="left:661px;top:85px;color:#000">Add</div>
<div class="t c" style="left:661px;top:98px;color:#000">Physics</div>
<svg style="position:absolute;left:861px;top:52px;" width="32" height="33" viewBox="0 0 32 33"><ellipse cx="13" cy="15" rx="12" ry="5" fill="none" stroke="#6f8fae" stroke-width="1" transform="rotate(30 13 15)"/><ellipse cx="13" cy="15" rx="12" ry="5" fill="none" stroke="#6f8fae" stroke-width="1" transform="rotate(-30 13 15)"/><ellipse cx="13" cy="15" rx="5" ry="13" fill="none" stroke="#6f8fae" stroke-width="1"/><circle cx="13" cy="15" r="2.2" fill="#e0306a"/><circle cx="4" cy="8" r="1.8" fill="#4ab83a"/><circle cx="23" cy="12" r="1.8" fill="#f5a623"/><circle cx="9" cy="24" r="1.8" fill="#1d5aa6"/><circle cx="20" cy="22" r="1.8" fill="#1d5aa6"/><path d="M22.5 19.5 H26.5 V25 H30 L24.5 30 L19 25 H22.5 Z" fill="#555f6a"/><path d="M18.5 31.3 H30" stroke="#555f6a" stroke-width="1.3"/></svg>
<div class="t c" style="left:722px;top:85px;color:#000">Add</div>
<div class="t c" style="left:722px;top:98px;color:#000">Multiphysics</div>
<svg style="position:absolute;left:934px;top:58px;" width="25" height="22" viewBox="0 0 25 22"><path d="M5 3 L9 0.5 H24 L20 3 Z" fill="#5a6a7a"/><path d="M20 3 L24 0.5 V18 L20 21 Z" fill="#2a3440"/><rect x="1" y="3" width="19" height="18" fill="#3c4a5a"/><path d="M10.5 3 V21 M1 12 H20" stroke="#8a9aaa" stroke-width="1"/></svg>
<div class="t c" style="left:796px;top:85px;color:#000">Build</div>
<div class="t c" style="left:796px;top:98px;color:#000">Mesh</div>
<svg style="position:absolute;left:975px;top:54px;" width="32" height="28" viewBox="0 0 32 28"><path d="M16 1 L31 27 H1 Z" fill="#d4dae2" stroke="#555f6c" stroke-width="1.5"/><path d="M8.5 14 H23.5 M4.75 20.5 H27.25 M12.25 7.5 L23.5 27 M19.75 7.5 L8.5 27 M8.5 14 L16 27 M23.5 14 L16 27 M4.75 20.5 L8.5 27 M27.25 20.5 L23.5 27 M12.25 7.5 H19.75" stroke="#555f6c" stroke-width=".8" fill="none"/></svg>
<div class="t c" style="left:840px;top:85px;color:#000">Mesh</div>
<div class="t c" style="left:840px;top:98px;color:#000">1<svg width="7" height="4" style="vertical-align:middle;margin-left:3px;position:relative;top:-1px"><path d="M0 0 H7 L3.5 4 Z" fill="#222"/></svg></div>
<svg style="position:absolute;left:1046px;top:62px;" width="19" height="14" viewBox="0 0 19 14"><rect x="0" y="0" width="19" height="4.5" fill="#1a8ab0"/><rect x="0" y="8.5" width="19" height="4.5" fill="#1a8ab0"/></svg>
<div class="t c" style="left:905px;top:85px;color:#000">Compute</div>
<div class="t c" style="left:905px;top:98px;color:#000"></div>
<div class="t c" style="left:905px;top:98px;"></div>
<svg style="position:absolute;left:1089px;top:58px;" width="32" height="20" viewBox="0 0 32 20"><path d="M1 7 C4 1 7 3 10.5 9" fill="none" stroke="#1a8a9c" stroke-width="1.4"/><circle cx="15.5" cy="12.5" r="4.8" fill="none" stroke="#1a8a9c" stroke-width="1.4"/><circle cx="26" cy="12" r="4.5" fill="none" stroke="#1a8a9c" stroke-width="1.4"/><path d="M18 6 C19 2.5 22 2 27 6" fill="none" stroke="#1a8a9c" stroke-width="1.3"/></svg>
<div class="t c" style="left:954px;top:85px;color:#000">Study</div>
<div class="t c" style="left:954px;top:98px;color:#000">1<svg width="7" height="4" style="vertical-align:middle;margin-left:3px;position:relative;top:-1px"><path d="M0 0 H7 L3.5 4 Z" fill="#222"/></svg></div>
<svg style="position:absolute;left:1133px;top:53px;" width="32" height="32" viewBox="0 0 32 32"><path d="M1 7 C4 1 7 3 10.5 9" fill="none" stroke="#1a8a9c" stroke-width="1.4"/><circle cx="15.5" cy="11.5" r="4.8" fill="none" stroke="#1a8a9c" stroke-width="1.4"/><circle cx="26" cy="11" r="4.5" fill="none" stroke="#1a8a9c" stroke-width="1.4"/><path d="M18 5 C19 1.5 22 1 27 5" fill="none" stroke="#1a8a9c" stroke-width="1.3"/><path d="M24.5 19 H27 V25 H30 L25.7 29.5 L21.5 25 H24.5 Z" fill="#555f6a"/><path d="M20 31 H31" stroke="#555f6a" stroke-width="1.3"/></svg>
<div class="t c" style="left:997px;top:85px;color:#000">Add</div>
<div class="t c" style="left:997px;top:98px;color:#000">Study</div>
<svg style="position:absolute;left:1203px;top:55px;" width="28" height="26" viewBox="0 0 28 26"><path d="M0.5 1 L8 7 V25 L0.5 19 Z" fill="#e6b4cc"/><path d="M0.5 1 H20 L26.5 7 H8 Z" fill="#f0cde0"/><rect x="8.5" y="7" width="18" height="18" fill="#e8bcd4"/><path d="M8 7 V25" stroke="#fff" stroke-width="1"/></svg>
<div class="t c" style="left:1065px;top:85px;color:#b8b8b8">Select Plot</div>
<div class="t c" style="left:1065px;top:98px;color:#b8b8b8">Group<svg width="7" height="4" style="vertical-align:middle;margin-left:3px;position:relative;top:-1px"><path d="M0 0 H7 L3.5 4 Z" fill="#c0c0c0"/></svg></div>
<svg style="position:absolute;left:1262px;top:55px;" width="30" height="28" viewBox="0 0 30 28"><path d="M0 12 L3.6 9 V17 H11.5 V27 L0 19 Z" fill="#8a8a8a"/><rect x="11.5" y="20.5" width="17.5" height="6.5" fill="#fff" stroke="#777"/><rect x="3.6" y="1" width="14.9" height="14" fill="#fff" stroke="#555"/><rect x="5" y="2.5" width="12" height="11" fill="#b01e6a"/><rect x="7.6" y="4.4" width="15.4" height="13" fill="#fff" stroke="#555"/><rect x="9" y="6" width="12.5" height="10" fill="#b01e6a"/><rect x="11.7" y="7.3" width="15.7" height="13" fill="#fff" stroke="#555"/><rect x="13.2" y="8.9" width="12.6" height="8.5" fill="#b01e6a"/></svg>
<div class="t c" style="left:1126px;top:85px;color:#000">Add Plot</div>
<div class="t c" style="left:1126px;top:98px;color:#000">Group<svg width="7" height="4" style="vertical-align:middle;margin-left:3px;position:relative;top:-1px"><path d="M0 0 H7 L3.5 4 Z" fill="#222"/></svg></div>
<svg style="position:absolute;left:1331px;top:55px;" width="34" height="26" viewBox="0 0 34 26"><rect x="0.5" y="0.5" width="24" height="16" fill="#fff" stroke="#4a80c0"/><rect x="0.5" y="0.5" width="24" height="4" fill="#d0e2f4" stroke="#4a80c0"/><rect x="8.5" y="9.5" width="24" height="16" fill="#fff" stroke="#4a80c0"/><rect x="8.5" y="9.5" width="24" height="4" fill="#d0e2f4" stroke="#4a80c0"/></svg>
<div class="t c" style="left:1196px;top:85px;">Windows</div>
<div class="t c" style="left:1196px;top:98px;"><svg width="7" height="4" style="vertical-align:middle;margin-left:3px;position:relative;top:-1px"><path d="M0 0 H7 L3.5 4 Z" fill="#222"/></svg></div>
<svg style="position:absolute;left:1391px;top:57px;" width="29" height="24" viewBox="0 0 29 24"><rect x="0.5" y="0.5" width="24" height="18" fill="#fff" stroke="#666"/><rect x="0.5" y="0.5" width="24" height="4" fill="#ddd" stroke="#666"/><path d="M5 4.5 V18.5" stroke="#666"/><path d="M25 12 A5.5 5.5 0 1 1 19.5 7" fill="none" stroke="#3a85d0" stroke-width="2"/><path d="M18 3 L23 7 L18 10 Z" fill="#3a85d0"/></svg>
<div class="t c" style="left:1252px;top:85px;color:#000">Reset</div>
<div class="t c" style="left:1252px;top:98px;color:#000">Desktop<svg width="7" height="4" style="vertical-align:middle;margin-left:3px;position:relative;top:-1px"><path d="M0 0 H7 L3.5 4 Z" fill="#222"/></svg></div>
<svg style="position:absolute;left:3px;top:0px;" width="15" height="15" viewBox="0 0 15 15"><rect x="1" y="1" width="13" height="13" rx="3" fill="#dfe4ea"/><rect x="2.5" y="3.5" width="10" height="8" rx="2" fill="#1f5fb0"/><path d="M5 5 H11 V10 H5 Z" fill="#f5d21c"/><path d="M8 5 H11 V10 H8 Z" fill="#5ab0f0"/></svg>
<div style="position:absolute;left:26px;top:3px;width:1px;height:12px;background:#777"></div>
<svg style="position:absolute;left:35px;top:1px;" width="14" height="15" viewBox="0 0 14 15"><path d="M1 0.5 H9 L13 4.5 V14.5 H1 Z" fill="#fff" stroke="#1d3f70"/><path d="M9 0.5 V4.5 H13" fill="none" stroke="#1d3f70"/></svg>
<svg style="position:absolute;left:58px;top:3px;" width="17" height="12" viewBox="0 0 17 12"><path d="M0.5 2 H6 L7.5 3.5 H14 V11.5 H0.5 Z" fill="#e8a93a"/><path d="M3 6 H16.5 L14 11.5 H0.5 Z" fill="#f2c060"/></svg>
<svg style="position:absolute;left:83px;top:1px;" width="15" height="15" viewBox="0 0 15 15"><path d="M0.5 0.5 H12 L14.5 3 V14.5 H0.5 Z" fill="#3a6fb5"/><rect x="3" y="1" width="8" height="5" fill="#fff"/><rect x="4" y="10" width="7" height="4.5" fill="#fff"/><rect x="5.5" y="11" width="4" height="3" fill="#3a6fb5"/></svg>
<svg style="position:absolute;left:107px;top:1px;" width="16" height="16" viewBox="0 0 16 16"><path d="M0.5 0.5 H12 L14.5 3 V14.5 H0.5 Z" fill="#3a6fb5"/><rect x="3" y="1" width="8" height="5" fill="#fff"/><path d="M3 2.5 H10 M3 4.5 H10" stroke="#3a6fb5" stroke-width=".8"/><path d="M7 9 L13 15 L15.5 12.5 L9.5 6.5 Z" fill="#f2b84a"/></svg>
<svg style="position:absolute;left:133px;top:2px;" width="12" height="13" viewBox="0 0 12 13"><path d="M1 0.5 L11 6.5 L1 12.5 Z" fill="#3aa83a"/></svg>
<svg style="position:absolute;left:155px;top:1px;" width="15" height="15" viewBox="0 0 15 15"><path d="M5 2 L0.5 6 L5 10 Z" fill="#3a6fb5"/><path d="M3 6 H9 A4.5 4.5 0 0 1 9 15 H6" fill="none" stroke="#3a6fb5" stroke-width="2.2"/></svg>
<svg style="position:absolute;left:178px;top:1px;" width="15" height="15" viewBox="0 0 15 15"><path d="M10 2 L14.5 6 L10 10 Z" fill="#999"/><path d="M12 6 H6 A4.5 4.5 0 0 0 6 15 H9" fill="none" stroke="#999" stroke-width="2.2"/></svg>
<svg style="position:absolute;left:203px;top:1px;" width="16" height="16" viewBox="0 0 16 16"><rect x="0.5" y="0.5" width="9" height="10" fill="#fff" stroke="#333"/><path d="M2 3 H8 M2 5 H8 M2 7 H8" stroke="#333" stroke-width=".8"/><rect x="5.5" y="5.5" width="10" height="10" fill="#fff" stroke="#1d3f70"/><path d="M7.5 8.5 H13.5 M7.5 10.5 H13.5 M7.5 12.5 H13.5" stroke="#1d3f70"/></svg>
<svg style="position:absolute;left:227px;top:1px;" width="16" height="16" viewBox="0 0 16 16"><rect x="0.5" y="2.5" width="10" height="12" fill="#eee" stroke="#b0b0b0"/><rect x="3" y="0.5" width="5" height="3" fill="#c8c8c8" stroke="#b0b0b0"/><rect x="6.5" y="6.5" width="9" height="9" fill="#fff" stroke="#b0b0b0"/></svg>
<svg style="position:absolute;left:250px;top:1px;" width="16" height="16" viewBox="0 0 16 16"><rect x="0.5" y="0.5" width="10" height="11" fill="#fff" stroke="#333"/><rect x="5.5" y="4.5" width="10" height="11" fill="#fff" stroke="#333"/><path d="M3 9 H12 M9.5 6.5 L12 9 L9.5 11.5" stroke="#1d4f8f" stroke-width="1.6" fill="none"/></svg>
<svg style="position:absolute;left:277px;top:1px;" width="12" height="16" viewBox="0 0 12 16"><path d="M0.5 2.5 H11.5 M4 2.5 V0.5 H8 V2.5 M1.5 3.5 L2.5 15.5 H9.5 L10.5 3.5 M4.5 5 V13.5 M7.5 5 V13.5" fill="none" stroke="#a0a0a0"/></svg>
<svg style="position:absolute;left:299px;top:1px;" width="15" height="15" viewBox="0 0 15 15"><rect x="0.5" y="0.5" width="13" height="13" fill="none" stroke="#a0a0a0" stroke-dasharray="2 1"/><rect x="3" y="3" width="6" height="6" fill="#c8c8c8"/><path d="M7 7 L14 14 M7 7 V12 M7 7 H12" stroke="#a0a0a0" stroke-width="1.2"/></svg>
<svg style="position:absolute;left:323px;top:1px;" width="14" height="15" viewBox="0 0 14 15"><rect x="0.5" y="0.5" width="13" height="13" fill="none" stroke="#a0a0a0" stroke-dasharray="2 1"/><path d="M3 3 L10 10 V3 Z" fill="#c8c8c8"/><path d="M1.5 0 L7 14" stroke="#a0a0a0"/></svg>
<svg style="position:absolute;left:346px;top:1px;" width="17" height="16" viewBox="0 0 17 16"><rect x="0.5" y="0.5" width="10" height="12" fill="#fff" stroke="#333"/><path d="M2.5 3 H8.5 M2.5 5.5 H8.5 M2.5 8 H6" stroke="#333" stroke-width=".8"/><circle cx="11" cy="10.5" r="3" fill="#fff" stroke="#3aa83a" stroke-width="1.5"/><path d="M13 12.5 L16 15.5" stroke="#3aa83a" stroke-width="2"/></svg>
<svg style="position:absolute;left:368px;top:6px;" width="7" height="4" viewBox="0 0 7 4"><path d="M0 0 H7 L3.5 4 Z" fill="#111"/></svg>
<div style="position:absolute;left:382px;top:3px;width:1px;height:12px;background:#777"></div>
<div style="position:absolute;left:1814px;top:0px;width:103px;height:16px;border:1px solid #4a4a4a;border-top:none;border-radius:0 0 5px 5px;background:linear-gradient(#ececec 0,#dedede 45%,#b4b8bc 50%,#c4c8cc 100%)"></div>
<div style="position:absolute;left:1841px;top:0px;width:1px;height:15px;background:#555"></div>
<div style="position:absolute;left:1869px;top:0px;width:47px;height:15px;background:linear-gradient(#f2ae9e 0,#e48a72 45%,#c2401f 52%,#d8623e 100%);border-radius:0 0 4px 0;border-bottom:1px solid #5a1a10"></div>
<div style="position:absolute;left:1823px;top:7px;width:12px;height:5px;background:#fff;border:1px solid #3a4050;border-radius:1px"></div>
<svg style="position:absolute;left:1848px;top:1px;" width="14" height="13" viewBox="0 0 14 13"><rect x="3.5" y="1" width="8" height="8" rx="1" fill="#fff" stroke="#3a4050" stroke-width="1.1"/><rect x="1" y="3.8" width="8" height="8.5" rx="1" fill="#fff" stroke="#3a4050" stroke-width="1.1"/><rect x="3.5" y="6.3" width="3" height="3" fill="none" stroke="#3a4050" stroke-width="1"/></svg>
<svg style="position:absolute;left:1886px;top:1px;" width="13" height="12" viewBox="0 0 13 12"><path d="M2 2 L11 10 M11 2 L2 10" stroke="#3a2020" stroke-width="4" stroke-linecap="round"/><path d="M2 2 L11 10 M11 2 L2 10" stroke="#fff" stroke-width="2.3" stroke-linecap="round"/></svg></body></html>
